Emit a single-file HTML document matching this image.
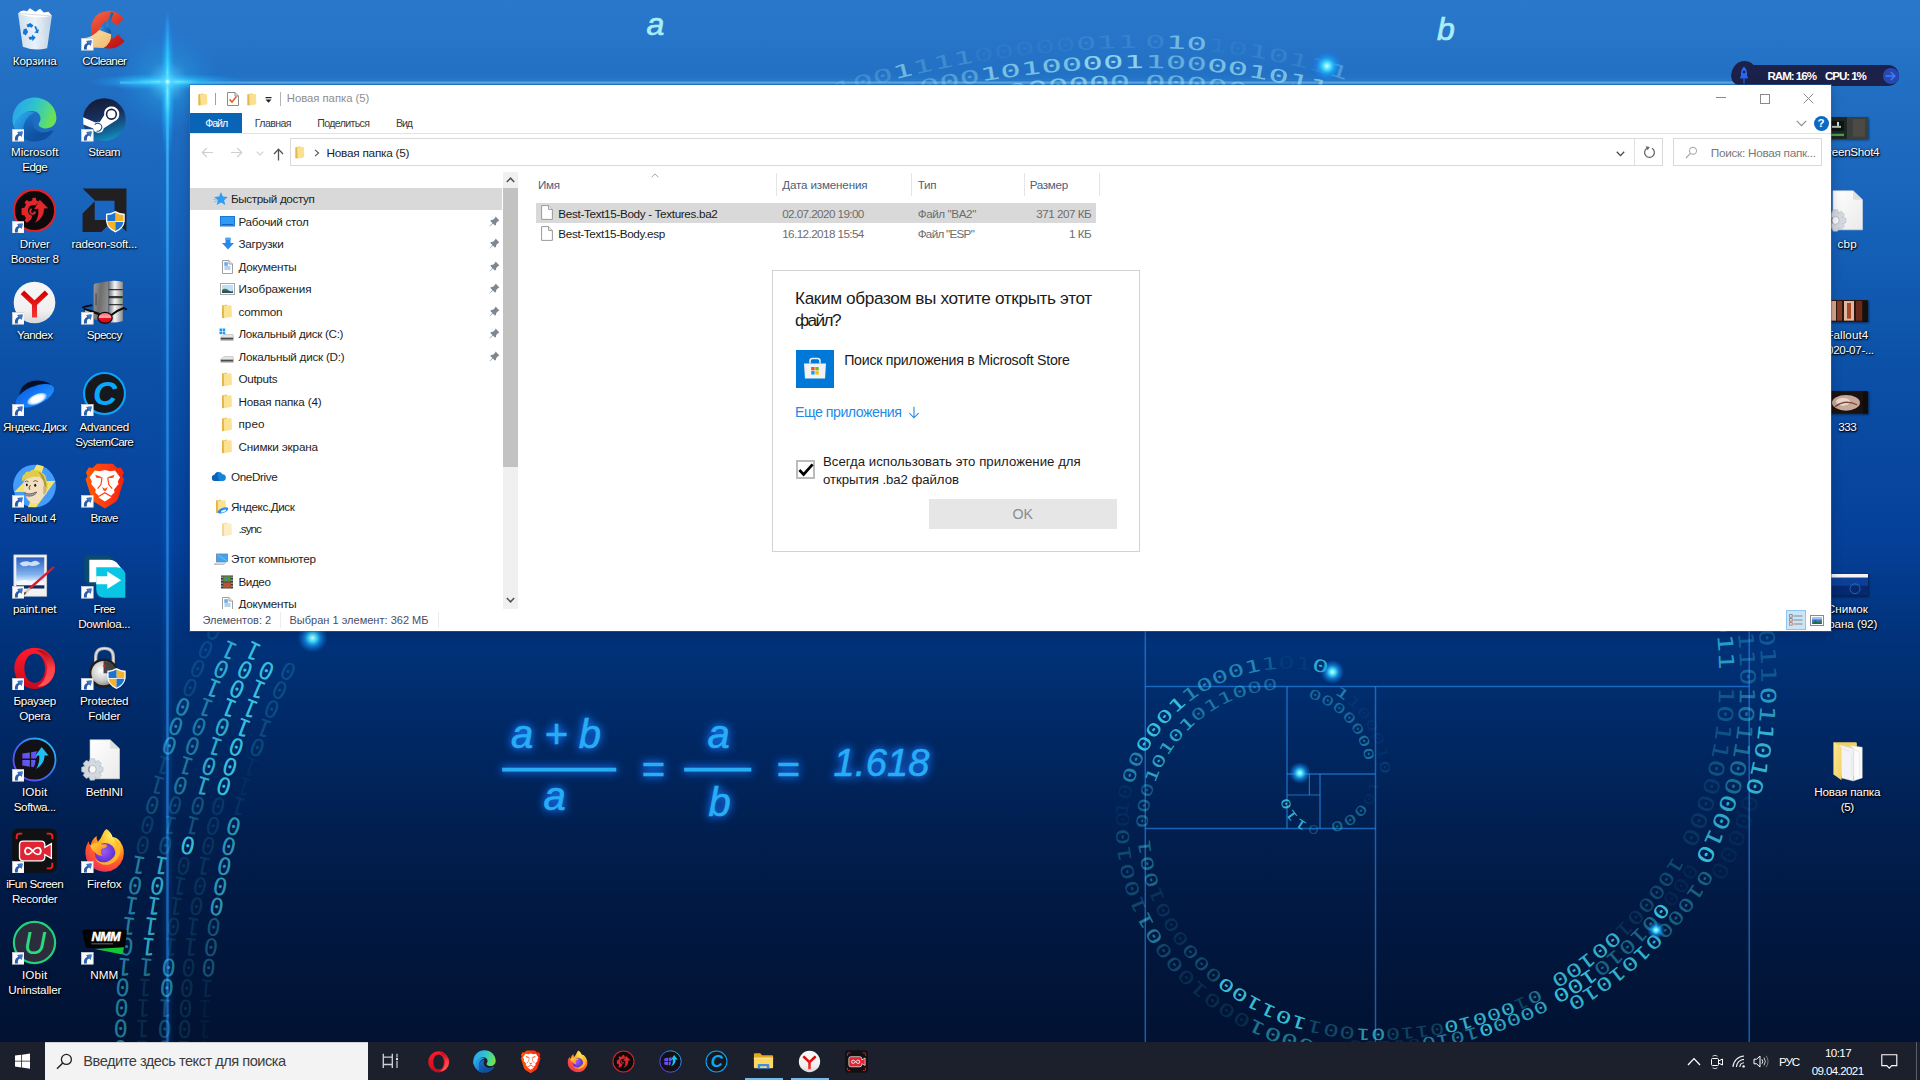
<!DOCTYPE html>
<html lang="ru"><head><meta charset="utf-8"><title>Новая папка (5)</title>
<style>
html,body{margin:0;padding:0;background:#01102e;}
body{width:1920px;height:1080px;position:relative;overflow:hidden;font-family:"Liberation Sans",sans-serif;-webkit-font-smoothing:antialiased;}
span{font-kerning:normal}
.dl{text-shadow:0 1px 2px rgba(0,0,0,0.9),1px 1px 1px rgba(0,0,0,0.75),0 0 3px rgba(0,0,0,0.55);}
</style></head><body>
<svg id="wall" width="1920" height="1080" viewBox="0 0 1920 1080" style="position:absolute;left:0;top:0">
<defs>
<linearGradient id="bg" x1="0" y1="0" x2="0" y2="1">
<stop offset="0" stop-color="#2a78cc"/>
<stop offset="0.035" stop-color="#2775c9"/>
<stop offset="0.072" stop-color="#2270c4"/>
<stop offset="0.2" stop-color="#1763ba"/>
<stop offset="0.35" stop-color="#0b4fa6"/>
<stop offset="0.5" stop-color="#05409a"/>
<stop offset="0.585" stop-color="#01337c"/>
<stop offset="0.68" stop-color="#002864"/>
<stop offset="0.775" stop-color="#011e4e"/>
<stop offset="0.87" stop-color="#01173e"/>
<stop offset="0.965" stop-color="#011232"/>
<stop offset="1" stop-color="#01102e"/>
</linearGradient>
<radialGradient id="flare" cx="0.5" cy="0.5" r="0.5">
<stop offset="0" stop-color="#ffffff" stop-opacity="1"/>
<stop offset="0.12" stop-color="#aef4ff" stop-opacity="0.95"/>
<stop offset="0.4" stop-color="#2fd0ff" stop-opacity="0.55"/>
<stop offset="1" stop-color="#1aa0ff" stop-opacity="0"/>
</radialGradient>
<radialGradient id="dot" cx="0.5" cy="0.5" r="0.5">
<stop offset="0" stop-color="#d8fdff" stop-opacity="1"/>
<stop offset="0.28" stop-color="#3fe0ff" stop-opacity="0.95"/>
<stop offset="0.55" stop-color="#1aa8ff" stop-opacity="0.6"/>
<stop offset="1" stop-color="#0a7cff" stop-opacity="0"/>
</radialGradient>
<linearGradient id="vline" x1="0" y1="0" x2="0" y2="1">
<stop offset="0" stop-color="#4fc6ff" stop-opacity="0"/>
<stop offset="0.06" stop-color="#4fc6ff" stop-opacity="0.9"/>
<stop offset="0.3" stop-color="#2f9cf0" stop-opacity="0.75"/>
<stop offset="1" stop-color="#1e78e0" stop-opacity="0.7"/>
</linearGradient>
<filter id="glow" x="-20%" y="-20%" width="140%" height="140%"><feGaussianBlur stdDeviation="3"/></filter>
<filter id="glow2" x="-10%" y="-30%" width="120%" height="160%"><feGaussianBlur stdDeviation="4.5"/></filter>
<filter id="soft" x="-5%" y="-5%" width="110%" height="110%"><feGaussianBlur stdDeviation="0.5"/></filter>
</defs>
<rect width="1920" height="1080" fill="url(#bg)"/>
<rect x="0" y="0" width="1920" height="1080" fill="#001a60" opacity="0.0"/>
<g filter="url(#glow)" opacity="0.55">
<line x1="167.5" y1="20" x2="167.5" y2="1045" stroke="#1e90ff" stroke-opacity="0.7" stroke-width="3"/>
<line x1="120" y1="82.5" x2="1750" y2="82.5" stroke="#3fa8f5" stroke-opacity="0.8" stroke-width="5"/>
</g>
<rect x="166.3" y="10" width="2.4" height="1035" fill="url(#vline)"/>
<line x1="120" y1="82.6" x2="1750" y2="82.6" stroke="#62b4ea" stroke-opacity="0.9" stroke-width="2.4"/>
<line x1="1145.3" y1="82" x2="1145.3" y2="1045" stroke="#2a8cf0" stroke-opacity="0.62" stroke-width="1.5"/>
<line x1="1749.2" y1="82" x2="1749.2" y2="1045" stroke="#2a8cf0" stroke-opacity="0.62" stroke-width="1.5"/>
<line x1="1145" y1="686.5" x2="1749" y2="686.5" stroke="#2a8cf0" stroke-opacity="0.62" stroke-width="1.5"/>
<line x1="1375.5" y1="686.5" x2="1375.5" y2="1045" stroke="#2a8cf0" stroke-opacity="0.62" stroke-width="1.5"/>
<line x1="1145" y1="828.6" x2="1375.5" y2="828.6" stroke="#2a8cf0" stroke-opacity="0.62" stroke-width="1.5"/>
<line x1="1287" y1="686.5" x2="1287" y2="828.6" stroke="#2a8cf0" stroke-opacity="0.62" stroke-width="1.5"/>
<line x1="1287" y1="774" x2="1375.5" y2="774" stroke="#2a8cf0" stroke-opacity="0.62" stroke-width="1.5"/>
<line x1="1320" y1="774" x2="1320" y2="828.6" stroke="#2a8cf0" stroke-opacity="0.62" stroke-width="1.5"/>
<line x1="1287" y1="795" x2="1320" y2="795" stroke="#2a8cf0" stroke-opacity="0.7" stroke-width="1.2"/>
<line x1="1309.4" y1="774" x2="1309.4" y2="795" stroke="#2a8cf0" stroke-opacity="0.7" stroke-width="1.2"/>
<g>
<ellipse cx="167.5" cy="81.7" rx="52" ry="52" fill="url(#flare)" opacity="0.38"/>
<ellipse cx="167.5" cy="81.7" rx="80" ry="8.5" fill="url(#flare)"/>
<ellipse cx="167.5" cy="81.7" rx="50" ry="3.4" fill="url(#flare)"/>
<ellipse cx="167.5" cy="88" rx="7.5" ry="76" fill="url(#flare)"/>
<ellipse cx="167.5" cy="84" rx="3.6" ry="52" fill="url(#flare)"/>
<ellipse cx="167.5" cy="81.7" rx="22" ry="22" fill="url(#flare)" opacity="0.6"/>
<ellipse cx="167.5" cy="81.7" rx="9" ry="9" fill="url(#flare)"/>
</g>
<path id="p1" d="M201.2 1051.3 A943.9 943.9 0 0 1 296.6 645.7" fill="none"/>
<text font-family="'DejaVu Sans Mono','Liberation Mono',monospace" font-size="24" letter-spacing="6.15" fill="#3fd3ea" rotate="-90"><textPath href="#p1"><tspan fill-opacity="0.06">011</tspan><tspan fill-opacity="0.11">1</tspan><tspan fill-opacity="0.32">000</tspan><tspan fill-opacity="0.68">0</tspan><tspan fill-opacity="0.68">0000</tspan><tspan fill-opacity="0.11">1</tspan><tspan fill-opacity="0.06">11</tspan><tspan fill-opacity="0.21">01000</tspan></textPath></text>
<path id="p2" d="M181.2 1051.1 A963.9 963.9 0 0 1 278.7 637.0" fill="none"/>
<text font-family="'DejaVu Sans Mono','Liberation Mono',monospace" font-size="24" letter-spacing="6.15" fill="#3fd3ea" rotate="-90"><textPath href="#p2"><tspan fill-opacity="0.15">100</tspan><tspan fill-opacity="0.15">00110</tspan><tspan fill-opacity="0.15">01000</tspan><tspan fill-opacity="0.90">00011</tspan><tspan fill-opacity="0.90">10</tspan></textPath></text>
<path id="p3" d="M161.2 1050.9 A983.9 983.9 0 0 1 260.7 628.2" fill="none"/>
<text font-family="'DejaVu Sans Mono','Liberation Mono',monospace" font-size="24" letter-spacing="6.15" fill="#3fd3ea" rotate="-90"><textPath href="#p3"><tspan fill-opacity="0.28">001</tspan><tspan fill-opacity="0.55">00</tspan><tspan fill-opacity="0.15">10110</tspan><tspan fill-opacity="0.90">0</tspan><tspan fill-opacity="0.28">10</tspan><tspan fill-opacity="0.75">1010</tspan><tspan fill-opacity="0.90">100</tspan><tspan fill-opacity="0.90">1</tspan></textPath></text>
<path id="p4" d="M139.2 1050.7 A1005.9 1005.9 0 0 1 240.9 618.6" fill="none"/>
<text font-family="'DejaVu Sans Mono','Liberation Mono',monospace" font-size="24" letter-spacing="6.15" fill="#3fd3ea" rotate="-90"><textPath href="#p4"><tspan fill-opacity="0.13">1</tspan><tspan fill-opacity="0.13">111</tspan><tspan fill-opacity="0.47">1</tspan><tspan fill-opacity="0.77">11101</tspan><tspan fill-opacity="0.24">010</tspan><tspan fill-opacity="0.47">01001</tspan><tspan fill-opacity="0.77">10</tspan><tspan fill-opacity="0.77">1</tspan></textPath></text>
<path id="p5" d="M117.2 1050.5 A1027.9 1027.9 0 0 1 221.1 608.9" fill="none"/>
<text font-family="'DejaVu Sans Mono','Liberation Mono',monospace" font-size="24" letter-spacing="6.15" fill="#3fd3ea" rotate="-90"><textPath href="#p5"><tspan fill-opacity="0.54">0</tspan><tspan fill-opacity="0.54">0001</tspan><tspan fill-opacity="0.54">01101</tspan><tspan fill-opacity="0.17">00</tspan><tspan fill-opacity="0.25">01</tspan><tspan fill-opacity="0.17">1</tspan><tspan fill-opacity="0.54">000</tspan><tspan fill-opacity="0.17">0000</tspan></textPath></text>
<path id="p6" d="M828.7 140.9 A971.5 971.5 0 0 1 1145.0 88.0" fill="none"/>
<text font-family="'DejaVu Sans Mono','Liberation Mono',monospace" font-size="18" fill="#a5e8f4"><textPath href="#p6" textLength="307.5" lengthAdjust="spacingAndGlyphs"><tspan fill-opacity="0.73">01110</tspan><tspan fill-opacity="0.73">11110</tspan><tspan fill-opacity="0.73">0000</tspan><tspan fill-opacity="0.61">0</tspan></textPath></text>
<path id="p7" d="M822.2 122.0 A991.5 991.5 0 0 1 1145.0 68.0" fill="none"/>
<text font-family="'DejaVu Sans Mono','Liberation Mono',monospace" font-size="18" fill="#a5e8f4"><textPath href="#p7" textLength="328.0" lengthAdjust="spacingAndGlyphs"><tspan fill-opacity="0.14">00000</tspan><tspan fill-opacity="0.38">000</tspan><tspan fill-opacity="0.68">10100</tspan><tspan fill-opacity="0.81">001</tspan></textPath></text>
<path id="p8" d="M815.7 103.1 A1011.5 1011.5 0 0 1 1145.0 48.0" fill="none"/>
<text font-family="'DejaVu Sans Mono','Liberation Mono',monospace" font-size="18" fill="#a5e8f4"><textPath href="#p8" textLength="328.0" lengthAdjust="spacingAndGlyphs"><tspan fill-opacity="0.23">1100</tspan><tspan fill-opacity="0.61">1</tspan><tspan fill-opacity="0.23">111</tspan><tspan fill-opacity="0.06">00000</tspan><tspan fill-opacity="0.12">011</tspan></textPath></text>
<path id="p9" d="M1145.0 88.0 A598.5 598.5 0 0 1 1349.7 124.1" fill="none"/>
<text font-family="'DejaVu Sans Mono','Liberation Mono',monospace" font-size="18" fill="#a5e8f4"><textPath href="#p9" textLength="205.0" lengthAdjust="spacingAndGlyphs"><tspan fill-opacity="0.54">000</tspan><tspan fill-opacity="0.54">00</tspan><tspan fill-opacity="0.30">01</tspan><tspan fill-opacity="0.30">11</tspan><tspan fill-opacity="0.65">0</tspan></textPath></text>
<path id="p10" d="M1145.0 68.0 A618.5 618.5 0 0 1 1356.5 105.3" fill="none"/>
<text font-family="'DejaVu Sans Mono','Liberation Mono',monospace" font-size="18" fill="#a5e8f4"><textPath href="#p10" textLength="205.0" lengthAdjust="spacingAndGlyphs"><tspan fill-opacity="0.50">100</tspan><tspan fill-opacity="0.68">0010</tspan><tspan fill-opacity="0.68">110</tspan></textPath></text>
<path id="p11" d="M1145.0 48.0 A638.5 638.5 0 0 1 1363.4 86.5" fill="none"/>
<text font-family="'DejaVu Sans Mono','Liberation Mono',monospace" font-size="18" fill="#a5e8f4"><textPath href="#p11" textLength="205.0" lengthAdjust="spacingAndGlyphs"><tspan fill-opacity="0.12">0</tspan><tspan fill-opacity="0.61">10</tspan><tspan fill-opacity="0.06">10</tspan><tspan fill-opacity="0.12">1011</tspan><tspan fill-opacity="0.34">1</tspan></textPath></text>
<path id="p12" d="M1715.2 616.5 A574.4 574.4 0 0 1 1719.4 686.5" fill="none"/>
<text font-family="'DejaVu Sans Mono','Liberation Mono',monospace" font-size="21" fill="#3fd3ea"><textPath href="#p12" textLength="54.0" lengthAdjust="spacingAndGlyphs"><tspan fill-opacity="0.68">011</tspan></textPath></text>
<path id="p13" d="M1736.0 613.9 A595.4 595.4 0 0 1 1740.4 686.5" fill="none"/>
<text font-family="'DejaVu Sans Mono','Liberation Mono',monospace" font-size="21" fill="#3fd3ea"><textPath href="#p13" textLength="72.0" lengthAdjust="spacingAndGlyphs"><tspan fill-opacity="0.90">1</tspan><tspan fill-opacity="0.28">110</tspan></textPath></text>
<path id="p14" d="M1756.8 611.4 A616.4 616.4 0 0 1 1761.4 686.5" fill="none"/>
<text font-family="'DejaVu Sans Mono','Liberation Mono',monospace" font-size="21" fill="#3fd3ea"><textPath href="#p14" textLength="72.0" lengthAdjust="spacingAndGlyphs"><tspan fill-opacity="0.25">00</tspan><tspan fill-opacity="0.25">11</tspan></textPath></text>
<path id="p15" d="M1718.9 686.5 A343.4 339.0 0 0 1 1672.9 856.0" fill="none"/>
<text font-family="'DejaVu Sans Mono','Liberation Mono',monospace" font-size="21" fill="#3fd3ea"><textPath href="#p15" textLength="162.0" lengthAdjust="spacingAndGlyphs"><tspan fill-opacity="0.25">10110</tspan><tspan fill-opacity="0.14">0000</tspan></textPath></text>
<path id="p16" d="M1739.9 686.5 A364.4 358.0 0 0 1 1691.1 865.5" fill="none"/>
<text font-family="'DejaVu Sans Mono','Liberation Mono',monospace" font-size="21" fill="#3fd3ea"><textPath href="#p16" textLength="180.0" lengthAdjust="spacingAndGlyphs"><tspan fill-opacity="0.42">10110</tspan><tspan fill-opacity="0.42">0</tspan><tspan fill-opacity="0.75">001</tspan><tspan fill-opacity="0.90">0</tspan></textPath></text>
<path id="p17" d="M1760.9 686.5 A385.4 377.0 0 0 1 1709.3 875.0" fill="none"/>
<text font-family="'DejaVu Sans Mono','Liberation Mono',monospace" font-size="21" fill="#3fd3ea"><textPath href="#p17" textLength="198.0" lengthAdjust="spacingAndGlyphs"><tspan fill-opacity="0.68">01</tspan><tspan fill-opacity="0.81">1010</tspan><tspan fill-opacity="0.07">00000</tspan></textPath></text>
<path id="p18" d="M1673.9 855.3 A344.5 337.5 0 0 1 1537.2 984.5" fill="none"/>
<text font-family="'DejaVu Sans Mono','Liberation Mono',monospace" font-size="18" fill="#3fd3ea"><textPath href="#p18" textLength="176.0" lengthAdjust="spacingAndGlyphs"><tspan fill-opacity="0.25">1000</tspan><tspan fill-opacity="0.14">01</tspan><tspan fill-opacity="0.81">00100</tspan></textPath></text>
<path id="p19" d="M1688.6 861.8 A361.5 350.5 0 0 1 1545.2 996.0" fill="none"/>
<text font-family="'DejaVu Sans Mono','Liberation Mono',monospace" font-size="18" fill="#3fd3ea"><textPath href="#p19" textLength="192.0" lengthAdjust="spacingAndGlyphs"><tspan fill-opacity="0.08">0</tspan><tspan fill-opacity="0.08">00</tspan><tspan fill-opacity="0.90">0</tspan><tspan fill-opacity="0.42">01010</tspan><tspan fill-opacity="0.90">100</tspan></textPath></text>
<path id="p20" d="M1703.3 868.3 A378.5 363.5 0 0 1 1553.2 1007.5" fill="none"/>
<text font-family="'DejaVu Sans Mono','Liberation Mono',monospace" font-size="18" fill="#3fd3ea"><textPath href="#p20" textLength="192.0" lengthAdjust="spacingAndGlyphs"><tspan fill-opacity="0.38">01000</tspan><tspan fill-opacity="0.81">0101</tspan><tspan fill-opacity="0.81">010</tspan></textPath></text>
<path id="p21" d="M1538.6 988.8 A347.4 342.4 0 0 1 1345.2 1027.6" fill="none"/>
<text font-family="'DejaVu Sans Mono','Liberation Mono',monospace" font-size="15.5" fill="#3fd3ea"><textPath href="#p21" textLength="188.5" lengthAdjust="spacingAndGlyphs"><tspan fill-opacity="0.50">0</tspan><tspan fill-opacity="0.25">1</tspan><tspan fill-opacity="0.81">000</tspan><tspan fill-opacity="0.81">10</tspan><tspan fill-opacity="0.25">0110</tspan><tspan fill-opacity="0.68">01</tspan></textPath></text>
<path id="p22" d="M1544.7 999.4 A360.4 354.4 0 0 1 1344.1 1039.6" fill="none"/>
<text font-family="'DejaVu Sans Mono','Liberation Mono',monospace" font-size="15.5" fill="#3fd3ea"><textPath href="#p22" textLength="203.0" lengthAdjust="spacingAndGlyphs"><tspan fill-opacity="0.75">0000</tspan><tspan fill-opacity="0.90">0</tspan><tspan fill-opacity="0.55">1010</tspan><tspan fill-opacity="0.15">00100</tspan></textPath></text>
<path id="p23" d="M1355.8 1027.3 A226.1 202.1 0 0 1 1149.4 826.0" fill="none"/>
<text font-family="'DejaVu Sans Mono','Liberation Mono',monospace" font-size="16.5" fill="#3fd3ea"><textPath href="#p23" textLength="304.0" lengthAdjust="spacingAndGlyphs"><tspan fill-opacity="0.28">001</tspan><tspan fill-opacity="0.90">101</tspan><tspan fill-opacity="0.90">100</tspan><tspan fill-opacity="0.28">000</tspan><tspan fill-opacity="0.15">0001</tspan><tspan fill-opacity="0.42">001</tspan></textPath></text>
<path id="p24" d="M1332.7 1044.3 A246.7 221.7 0 0 1 1129.4 810.5" fill="none"/>
<text font-family="'DejaVu Sans Mono','Liberation Mono',monospace" font-size="17.5" fill="#3fd3ea"><textPath href="#p24" textLength="340.0" lengthAdjust="spacingAndGlyphs"><tspan fill-opacity="0.14">0</tspan><tspan fill-opacity="0.50">0001</tspan><tspan fill-opacity="0.14">00010</tspan><tspan fill-opacity="0.25">00</tspan><tspan fill-opacity="0.50">01</tspan><tspan fill-opacity="0.25">10010</tspan><tspan fill-opacity="0.07">0</tspan></textPath></text>
<path id="p25" d="M1147.6 828.6 A139.4 139.4 0 0 1 1287.0 689.2" fill="none"/>
<text font-family="'DejaVu Sans Mono','Liberation Mono',monospace" font-size="15.5" fill="#3fd3ea"><textPath href="#p25" textLength="210.0" lengthAdjust="spacingAndGlyphs"><tspan fill-opacity="0.34">000</tspan><tspan fill-opacity="0.72">10101</tspan><tspan fill-opacity="0.44">0110</tspan><tspan fill-opacity="0.34">00</tspan></textPath></text>
<path id="p26" d="M1127.5 817.4 A159.9 159.9 0 0 1 1328.4 674.2" fill="none"/>
<text font-family="'DejaVu Sans Mono','Liberation Mono',monospace" font-size="17" fill="#3fd3ea"><textPath href="#p26" textLength="280.5" lengthAdjust="spacingAndGlyphs"><tspan fill-opacity="0.08">10</tspan><tspan fill-opacity="0.55">00</tspan><tspan fill-opacity="0.90">0001</tspan><tspan fill-opacity="0.55">10001</tspan><tspan fill-opacity="0.28">1</tspan><tspan fill-opacity="0.08">01</tspan><tspan fill-opacity="0.75">0</tspan></textPath></text>
<path id="p27" d="M1307.5 697.4 A79.3 79.3 0 0 1 1366.3 774.0" fill="none"/>
<text font-family="'DejaVu Sans Mono','Liberation Mono',monospace" font-size="13" fill="#3fd3ea"><textPath href="#p27" textLength="91.0" lengthAdjust="spacingAndGlyphs"><tspan fill-opacity="0.38">00000</tspan><tspan fill-opacity="0.45">00</tspan></textPath></text>
<path id="p28" d="M1333.7 693.2 A93.3 93.3 0 0 1 1380.0 782.1" fill="none"/>
<text font-family="'DejaVu Sans Mono','Liberation Mono',monospace" font-size="13" fill="#3fd3ea"><textPath href="#p28" textLength="98.0" lengthAdjust="spacingAndGlyphs"><tspan fill-opacity="0.50">1</tspan><tspan fill-opacity="0.07">10001</tspan><tspan fill-opacity="0.14">0</tspan></textPath></text>
<path id="p29" d="M1370.1 778.4 A50.3 50.3 0 0 1 1320.0 824.3" fill="none"/>
<text font-family="'DejaVu Sans Mono','Liberation Mono',monospace" font-size="13" fill="#3fd3ea"><textPath href="#p29" textLength="65.0" lengthAdjust="spacingAndGlyphs"><tspan fill-opacity="0.08">10</tspan><tspan fill-opacity="0.40">000</tspan></textPath></text>
<path id="p30" d="M1320.0 825.7 A30.7 30.7 0 0 1 1289.4 792.3" fill="none"/>
<text font-family="'DejaVu Sans Mono','Liberation Mono',monospace" font-size="12" fill="#3fd3ea"><textPath href="#p30" textLength="46.0" lengthAdjust="spacingAndGlyphs"><tspan fill-opacity="0.25">0</tspan><tspan fill-opacity="0.81">110</tspan></textPath></text>
<circle cx="1327" cy="66" r="15" fill="url(#dot)"/>
<circle cx="312.6" cy="637.7" r="15" fill="url(#dot)"/>
<circle cx="1332.4" cy="672" r="12" fill="url(#dot)"/>
<circle cx="1299.8" cy="773" r="11" fill="url(#dot)"/>
<circle cx="1656" cy="930" r="9" fill="url(#dot)"/>
<text x="655.5" y="35" font-family="'Liberation Sans',sans-serif" font-style="italic" font-size="32" fill="#a9eef6" stroke="#a9eef6" stroke-width="0.7" text-anchor="middle">a</text>
<text x="1446" y="40" font-family="'Liberation Sans',sans-serif" font-style="italic" font-size="32" fill="#a9eef6" stroke="#a9eef6" stroke-width="0.7" text-anchor="middle">b</text>
<g filter="url(#glow2)" opacity="0.85"><text x="556" y="748" font-family="'Liberation Sans',sans-serif" font-style="italic" font-size="40" fill="#1478ff" stroke="#1478ff" stroke-width="3" text-anchor="middle" textLength="90">a+b</text><rect x="502.5" y="768" width="113.5" height="3.2" fill="#1478ff" stroke="#1478ff" stroke-width="3"/><text x="554.5" y="809.5" font-family="'Liberation Sans',sans-serif" font-style="italic" font-size="40" fill="#1478ff" stroke="#1478ff" stroke-width="3" text-anchor="middle">a</text><text x="653.5" y="783" font-family="'Liberation Sans',sans-serif" font-size="40" fill="#1478ff" stroke="#1478ff" stroke-width="3" text-anchor="middle">=</text><text x="718.5" y="748" font-family="'Liberation Sans',sans-serif" font-style="italic" font-size="40" fill="#1478ff" stroke="#1478ff" stroke-width="3" text-anchor="middle">a</text><rect x="684.5" y="768" width="66.5" height="3.2" fill="#1478ff" stroke="#1478ff" stroke-width="3"/><text x="719.5" y="816" font-family="'Liberation Sans',sans-serif" font-style="italic" font-size="40" fill="#1478ff" stroke="#1478ff" stroke-width="3" text-anchor="middle">b</text><text x="788.5" y="783" font-family="'Liberation Sans',sans-serif" font-size="40" fill="#1478ff" stroke="#1478ff" stroke-width="3" text-anchor="middle">=</text><text x="881.5" y="776" font-family="'Liberation Sans',sans-serif" font-style="italic" font-size="38" fill="#1478ff" stroke="#1478ff" stroke-width="3" text-anchor="middle" textLength="96">1.618</text></g>
<g><text x="556" y="748" font-family="'Liberation Sans',sans-serif" font-style="italic" font-size="40" fill="#27adf4" stroke="#27adf4" stroke-width="0.6" text-anchor="middle" textLength="90">a+b</text><rect x="502.5" y="768" width="113.5" height="3.2" fill="#27adf4" stroke="#27adf4" stroke-width="0.6"/><text x="554.5" y="809.5" font-family="'Liberation Sans',sans-serif" font-style="italic" font-size="40" fill="#27adf4" stroke="#27adf4" stroke-width="0.6" text-anchor="middle">a</text><text x="653.5" y="783" font-family="'Liberation Sans',sans-serif" font-size="40" fill="#27adf4" stroke="#27adf4" stroke-width="0.6" text-anchor="middle">=</text><text x="718.5" y="748" font-family="'Liberation Sans',sans-serif" font-style="italic" font-size="40" fill="#27adf4" stroke="#27adf4" stroke-width="0.6" text-anchor="middle">a</text><rect x="684.5" y="768" width="66.5" height="3.2" fill="#27adf4" stroke="#27adf4" stroke-width="0.6"/><text x="719.5" y="816" font-family="'Liberation Sans',sans-serif" font-style="italic" font-size="40" fill="#27adf4" stroke="#27adf4" stroke-width="0.6" text-anchor="middle">b</text><text x="788.5" y="783" font-family="'Liberation Sans',sans-serif" font-size="40" fill="#27adf4" stroke="#27adf4" stroke-width="0.6" text-anchor="middle">=</text><text x="881.5" y="776" font-family="'Liberation Sans',sans-serif" font-style="italic" font-size="38" fill="#27adf4" stroke="#27adf4" stroke-width="0.6" text-anchor="middle" textLength="96">1.618</text></g>
</svg>
<div id="desktop"><svg style="position:absolute;left:12.200000000000003px;top:5.6px;overflow:visible" width="45" height="45" viewBox="0 0 48 48"><defs><linearGradient id="g1" x1="0" y1="0" x2="1" y2="0"><stop offset="0" stop-color="#dfe9f2"/><stop offset="0.5" stop-color="#ffffff"/><stop offset="1" stop-color="#cfdbe6"/></linearGradient></defs>
<path d="M6.5 8 L42.5 10.5 L37.5 45 Q24 48.5 11.5 43.5 Z" fill="url(#g1)" fill-opacity="0.9"/>
<path d="M6.5 8 Q10 3 16 5.5 L19 2.5 L25 6 L30 3 L34 7 L39 6 L42.5 10.5 Q24 15 6.5 8Z" fill="#fdfdfd"/>
<path d="M6.5 8 L42.5 10.5" stroke="#c6d3df" stroke-width="0.8" fill="none"/>
<path d="M28 12 L33 20 L29 30 L34 38 M14 14 L18 24 L13 32" stroke="#e3e9ef" stroke-width="1.2" fill="none"/>
<g fill="#1777d8"><path d="M15.5 20 L19.5 18.2 L23 20.8 L20.8 23.2 L19 22 L16.8 23Z"/><path d="M12.2 25 L15.2 23.6 L17.2 27.6 L14.6 31.4 L11.6 29.4Z"/><path d="M17.5 33 L21.5 32.4 L21.3 30.4 L25.3 33.6 L21.8 37.6 L21.6 35.6 L18.8 36Z"/><path d="M23.8 22 L25.8 26.6 L23.6 28.2 L27.8 29 L28.8 24.6 L27.4 25.6 L25.6 21.4Z"/></g></svg>
<span class="dl" style="position:absolute;left:-465.30px;width:1000px;text-align:center;top:52.90px;font-size:11.7px;line-height:15px;color:#fff;letter-spacing:-0.081px;white-space:nowrap;">Корзина</span>
<svg style="position:absolute;left:81.7px;top:5.6px;overflow:visible" width="45" height="45" viewBox="0 0 48 48"><defs><linearGradient id="g2" x1="0" y1="0" x2="0.6" y2="1"><stop offset="0" stop-color="#f36a4a"/><stop offset="0.5" stop-color="#e23a2a"/><stop offset="1" stop-color="#c01818"/></linearGradient>
<linearGradient id="g3" x1="0" y1="0" x2="1" y2="1"><stop offset="0" stop-color="#fbe3b0"/><stop offset="1" stop-color="#f0b868"/></linearGradient>
<linearGradient id="g4" x1="0" y1="0" x2="1" y2="0"><stop offset="0" stop-color="#3c8fdc"/><stop offset="1" stop-color="#0e5aa8"/></linearGradient></defs>
<path d="M44.5 13.5 Q37 4 27 5.2 Q11 7 9.6 23.5 Q9 41 25.5 45 Q37 47 45.5 37.5 L38.5 30 Q33.5 35.8 27 34.6 Q19.5 33 19.8 24.6 Q20.6 16.6 28 16.2 Q33.6 16.2 37.6 21 Z" fill="url(#g2)"/>
<path d="M31 6.5 L33.6 7.4 L27.6 25.2 L24.6 24.2 Z" fill="url(#g4)"/>
<path d="M18 23.6 Q21.6 20 27 22.6 Q31.6 25 31 29.8 L18.6 26.6Z" fill="url(#g4)"/>
<path d="M18.2 25.6 L31 30 Q31.6 40 22.6 44.8 Q15 44 9.2 44.2 L3.2 43.6 Q1 39 1.4 34.4 Q11 33.6 18.2 25.6Z" fill="url(#g3)"/></svg>
<svg style="position:absolute;left:81.4px;top:38.0px" width="12.6" height="12.6" viewBox="0 0 12.8 12.8"><rect x="0.4" y="0.4" width="12" height="12" fill="#fcfcfc" stroke="#cfcfcf" stroke-width="0.7"/><path d="M3 11.6 Q2.4 6.4 6.4 5.2 L5.4 3 L10.8 2.6 L10 8 L8.2 6.6 Q5.6 7.4 6 11.6Z" fill="#2b5cab"/><path d="M5.4 3 L10.8 2.6 L10 8 L8.6 6.4Z" fill="#3a76cc"/></svg>
<span class="dl" style="position:absolute;left:-395.80px;width:1000px;text-align:center;top:52.90px;font-size:11.7px;line-height:15px;color:#fff;letter-spacing:-0.678px;white-space:nowrap;">CCleaner</span>
<svg style="position:absolute;left:12.200000000000003px;top:97.0px;overflow:visible" width="45" height="45" viewBox="0 0 48 48"><defs><linearGradient id="g5" x1="0" y1="0" x2="0.9" y2="1"><stop offset="0" stop-color="#2fb2ee"/><stop offset="1" stop-color="#1467c4"/></linearGradient>
<linearGradient id="g6" x1="0.05" y1="0.3" x2="0.95" y2="0.55"><stop offset="0" stop-color="#2aa6ea"/><stop offset="0.45" stop-color="#2ec2d0"/><stop offset="0.8" stop-color="#4fd88a"/><stop offset="1" stop-color="#6ee052"/></linearGradient>
<linearGradient id="g7" x1="0.2" y1="0" x2="0.7" y2="1"><stop offset="0" stop-color="#1a70c6"/><stop offset="1" stop-color="#0d4a98"/></linearGradient></defs>
<path d="M0.6 24 C0.6 31 3.6 37.6 9 42 C13 45.4 18 47.2 22 47.4 C16 43 12.8 37.6 12.8 32 C12.8 24.6 17.6 19 24.6 17 C16 13 4 17 0.6 24Z" fill="url(#g5)"/>
<path d="M11 43.4 C14.6 46 19 47.4 24 47.4 C32 47.4 39.5 43.5 43.6 37 C44.4 35.6 43.2 34.6 42 35.4 C37 38.6 30 38.6 25.6 35 C21 31 20.6 25 23.6 20.6 C17 22 12.4 27 12.4 33 C12.4 37 13.6 40.6 11 43.4Z" fill="url(#g7)"/>
<path d="M12.4 33 C12.4 27 17 22 23.6 20.6 C21 24.4 21 31 25.6 35 C30 38.6 37 38.6 42 35.4 C36 43 26 45 19 41 C15 38.6 12.4 36 12.4 33Z" fill="url(#g7)"/>
<path d="M0.6 24 C0.6 10.6 11 0.6 24 0.6 C37 0.6 47.4 10.5 47.4 22.5 C47.4 29 42.5 33.5 36.5 33.5 C32 33.5 28.4 31.6 28.4 29 C28.4 27.6 30.4 26.4 30.4 22.6 C30.4 18.5 26.5 15 21.5 15 C12 15 3.5 21.5 2.4 31 C1.2 29 0.6 26.5 0.6 24Z" fill="url(#g6)"/></svg>
<svg style="position:absolute;left:11.900000000000002px;top:129.4px" width="12.6" height="12.6" viewBox="0 0 12.8 12.8"><rect x="0.4" y="0.4" width="12" height="12" fill="#fcfcfc" stroke="#cfcfcf" stroke-width="0.7"/><path d="M3 11.6 Q2.4 6.4 6.4 5.2 L5.4 3 L10.8 2.6 L10 8 L8.2 6.6 Q5.6 7.4 6 11.6Z" fill="#2b5cab"/><path d="M5.4 3 L10.8 2.6 L10 8 L8.6 6.4Z" fill="#3a76cc"/></svg>
<span class="dl" style="position:absolute;left:-465.30px;width:1000px;text-align:center;top:144.30px;font-size:11.7px;line-height:15px;color:#fff;letter-spacing:0.005px;white-space:nowrap;">Microsoft</span><span class="dl" style="position:absolute;left:-465.30px;width:1000px;text-align:center;top:159.30px;font-size:11.7px;line-height:15px;color:#fff;letter-spacing:-0.581px;white-space:nowrap;">Edge</span>
<svg style="position:absolute;left:81.7px;top:97.0px;overflow:visible" width="45" height="45" viewBox="0 0 48 48"><defs><linearGradient id="g8" x1="0.3" y1="0" x2="0.6" y2="1"><stop offset="0" stop-color="#151a33"/><stop offset="0.45" stop-color="#17305f"/><stop offset="0.8" stop-color="#13679a"/><stop offset="1" stop-color="#1192c2"/></linearGradient></defs>
<circle cx="23.8" cy="24" r="22.8" fill="url(#g8)"/>
<path d="M1.2 21.6 L14.4 27.2 Q16.6 26 19 26.6 L23.6 19.4 Q23 12 29.6 10.2 Q37 9 39.6 16 Q41 23.4 34 26.4 L23.2 33.4 Q22.2 38.4 17 38.2 Q12.8 37.6 12 33.6 L1.4 29.2 Z" fill="#fff"/>
<circle cx="31.4" cy="18.4" r="5.2" fill="none" stroke="#1a2348" stroke-width="1.7"/>
<path d="M13.6 29.6 A4.2 4.2 0 1 1 15.6 36.2" fill="none" stroke="#1d4f86" stroke-width="1.1"/></svg>
<svg style="position:absolute;left:81.4px;top:129.4px" width="12.6" height="12.6" viewBox="0 0 12.8 12.8"><rect x="0.4" y="0.4" width="12" height="12" fill="#fcfcfc" stroke="#cfcfcf" stroke-width="0.7"/><path d="M3 11.6 Q2.4 6.4 6.4 5.2 L5.4 3 L10.8 2.6 L10 8 L8.2 6.6 Q5.6 7.4 6 11.6Z" fill="#2b5cab"/><path d="M5.4 3 L10.8 2.6 L10 8 L8.6 6.4Z" fill="#3a76cc"/></svg>
<span class="dl" style="position:absolute;left:-395.80px;width:1000px;text-align:center;top:144.30px;font-size:11.7px;line-height:15px;color:#fff;letter-spacing:-0.363px;white-space:nowrap;">Steam</span>
<svg style="position:absolute;left:12.200000000000003px;top:188.4px;overflow:visible" width="45" height="45" viewBox="0 0 48 48"><circle cx="24" cy="24" r="22" fill="#0e0a0b" stroke="#e02228" stroke-width="2.2"/>
<g fill="#e3262b"><path d="M22 10.5 L25.4 10.5 L26 13.4 Q27.6 13.8 29 14.6 L25 18.4 Q22.6 17.6 20.4 18.6 Q16.6 20.6 17 24.8 Q17.6 28.6 21.6 29.6 L20.6 33 L18 35.4 L15.8 37 L13.4 34.6 L15 32 Q13.8 30.6 13.2 29 L10.2 28.6 L10.2 25 L10.2 21.6 L13.2 21 Q13.8 19.2 15 17.8 L13.4 15.2 L15.8 12.8 L18.4 14.4 Q19.8 13.6 21.4 13.2 Z"/>
<path d="M29.6 12.4 L38.6 21.6 L34.2 21.8 Q34.4 31.6 24.4 37.4 Q29 31 28 22.2 L23.6 22.6 Z"/>
<path d="M20.8 21.6 A3.6 3.6 0 1 0 25.6 25.4 L23.4 24.8 A1.6 1.6 0 1 1 21.4 23.4Z"/></g></svg>
<svg style="position:absolute;left:11.900000000000002px;top:220.8px" width="12.6" height="12.6" viewBox="0 0 12.8 12.8"><rect x="0.4" y="0.4" width="12" height="12" fill="#fcfcfc" stroke="#cfcfcf" stroke-width="0.7"/><path d="M3 11.6 Q2.4 6.4 6.4 5.2 L5.4 3 L10.8 2.6 L10 8 L8.2 6.6 Q5.6 7.4 6 11.6Z" fill="#2b5cab"/><path d="M5.4 3 L10.8 2.6 L10 8 L8.6 6.4Z" fill="#3a76cc"/></svg>
<span class="dl" style="position:absolute;left:-465.30px;width:1000px;text-align:center;top:235.70px;font-size:11.7px;line-height:15px;color:#fff;letter-spacing:-0.200px;white-space:nowrap;">Driver</span><span class="dl" style="position:absolute;left:-465.30px;width:1000px;text-align:center;top:250.70px;font-size:11.7px;line-height:15px;color:#fff;letter-spacing:-0.231px;white-space:nowrap;">Booster 8</span>
<svg style="position:absolute;left:81.7px;top:188.4px;overflow:visible" width="45" height="45" viewBox="0 0 48 48"><path d="M0.6 0.6 H47.4 V46.6 L34.6 33.8 V13.6 H14 Z" fill="#211f20"/><path d="M13.6 14.2 V34 H33.4 L20.6 46.8 H0.6 V27.2 Z" fill="#211f20"/><rect x="13.8" y="13.8" width="20.6" height="20" fill="#1a66c2"/><g transform="translate(25.6 24.4) scale(1.0)"><path d="M10 0 Q15 3 20 3 V11 Q19 19 10 23 Q1 19 0 11 V3 Q5 3 10 0Z" fill="#fff"/><path d="M10 1.6 Q14.4 4.2 18.6 4.4 V11 L10 11Z" fill="#f3b229"/><path d="M10 1.6 Q5.6 4.2 1.4 4.4 V11 L10 11Z" fill="#1d74d0"/><path d="M1.4 11.8 Q2.4 18 10 21.4 V11.8Z" fill="#f3b229"/><path d="M18.6 11.8 Q17.6 18 10 21.4 V11.8Z" fill="#1d74d0"/></g></svg>
<span class="dl" style="position:absolute;left:-395.80px;width:1000px;text-align:center;top:235.70px;font-size:11.7px;line-height:15px;color:#fff;letter-spacing:-0.246px;white-space:nowrap;">radeon-soft...</span>
<svg style="position:absolute;left:12.200000000000003px;top:279.80000000000007px;overflow:visible" width="45" height="45" viewBox="0 0 48 48"><defs><linearGradient id="g9" x1="0" y1="0" x2="0" y2="1"><stop offset="0" stop-color="#f7f7f7"/><stop offset="0.7" stop-color="#f0f0f0"/><stop offset="1" stop-color="#d6d6d8"/></linearGradient>
<linearGradient id="g10" x1="0" y1="0" x2="0" y2="1"><stop offset="0" stop-color="#d80000"/><stop offset="1" stop-color="#f53636"/></linearGradient></defs>
<circle cx="24" cy="24" r="22.2" fill="url(#g9)"/>
<path d="M11.1 13.3 L24 25.4 L36.9 13.3 M24 24 V40" fill="none" stroke="url(#g10)" stroke-width="5.4" stroke-linejoin="miter"/></svg>
<svg style="position:absolute;left:11.900000000000002px;top:312.20000000000005px" width="12.6" height="12.6" viewBox="0 0 12.8 12.8"><rect x="0.4" y="0.4" width="12" height="12" fill="#fcfcfc" stroke="#cfcfcf" stroke-width="0.7"/><path d="M3 11.6 Q2.4 6.4 6.4 5.2 L5.4 3 L10.8 2.6 L10 8 L8.2 6.6 Q5.6 7.4 6 11.6Z" fill="#2b5cab"/><path d="M5.4 3 L10.8 2.6 L10 8 L8.6 6.4Z" fill="#3a76cc"/></svg>
<span class="dl" style="position:absolute;left:-465.30px;width:1000px;text-align:center;top:327.10px;font-size:11.7px;line-height:15px;color:#fff;letter-spacing:-0.552px;white-space:nowrap;">Yandex</span>
<svg style="position:absolute;left:81.7px;top:279.80000000000007px;overflow:visible" width="45" height="45" viewBox="0 0 48 48"><defs><linearGradient id="g11" x1="0" y1="0" x2="1" y2="0.3"><stop offset="0" stop-color="#9a9a9a"/><stop offset="0.5" stop-color="#6e6e6e"/><stop offset="1" stop-color="#8c8c8c"/></linearGradient>
<linearGradient id="g12" x1="0" y1="0" x2="1" y2="0"><stop offset="0" stop-color="#6a6a6a"/><stop offset="0.45" stop-color="#f6f6f6"/><stop offset="1" stop-color="#8a8a8a"/></linearGradient>
<linearGradient id="g13" x1="0" y1="0" x2="0" y2="1"><stop offset="0" stop-color="#ff5a64"/><stop offset="0.45" stop-color="#ffb0b4"/><stop offset="0.55" stop-color="#e81424"/><stop offset="1" stop-color="#c00818"/></linearGradient></defs>
<path d="M12.4 6 Q12.4 4.4 14 3.8 L28 1.2 V45 L14 42 Q12.4 41.6 12.4 40 Z" fill="url(#g11)"/>
<path d="M28 1.2 Q36 0 43.6 2 V43.6 Q36 46 28 45Z" fill="url(#g12)"/>
<path d="M28.6 9.6 H43.4 V11 H28.6Z M28.6 17 H43.4 V19.4 H28.6Z M28.6 25.6 H43.4 V27 H28.6Z" fill="#1c1c1c" fill-opacity="0.85"/>
<circle cx="40.6" cy="21.8" r="0.9" fill="#5ae04a"/><path d="M15 14 V27" stroke="#4a4a4a" stroke-width="1.2"/>
<path d="M0.6 30 Q1 28.6 3 28.4 L11 26.8" fill="none" stroke="#0a0a0a" stroke-width="2"/>
<path d="M2 31 Q10 33 18.6 36.4" fill="none" stroke="#0a0a0a" stroke-width="2.4"/>
<path d="M31.4 37.4 Q37 32.6 44 30.2 Q46.6 29.6 47.4 32" fill="none" stroke="#0a0a0a" stroke-width="2.2"/>
<ellipse cx="24.6" cy="40.4" rx="7.6" ry="5.8" fill="url(#g13)" stroke="#140808" stroke-width="1.3"/>
<path d="M3 32 L11 35 L10 39 L4 37Z" fill="#dfe8f4" fill-opacity="0.75"/></svg>
<svg style="position:absolute;left:81.4px;top:312.20000000000005px" width="12.6" height="12.6" viewBox="0 0 12.8 12.8"><rect x="0.4" y="0.4" width="12" height="12" fill="#fcfcfc" stroke="#cfcfcf" stroke-width="0.7"/><path d="M3 11.6 Q2.4 6.4 6.4 5.2 L5.4 3 L10.8 2.6 L10 8 L8.2 6.6 Q5.6 7.4 6 11.6Z" fill="#2b5cab"/><path d="M5.4 3 L10.8 2.6 L10 8 L8.6 6.4Z" fill="#3a76cc"/></svg>
<span class="dl" style="position:absolute;left:-395.80px;width:1000px;text-align:center;top:327.10px;font-size:11.7px;line-height:15px;color:#fff;letter-spacing:-0.561px;white-space:nowrap;">Speccy</span>
<svg style="position:absolute;left:12.200000000000003px;top:371.20000000000005px;overflow:visible" width="45" height="45" viewBox="0 0 48 48"><defs><linearGradient id="g14" x1="0.1" y1="0" x2="0.7" y2="1"><stop offset="0" stop-color="#0a62e8"/><stop offset="1" stop-color="#1e90ff"/></linearGradient>
<linearGradient id="g15" x1="0.2" y1="0" x2="0.6" y2="1"><stop offset="0" stop-color="#02040c"/><stop offset="0.6" stop-color="#0a1f4a"/><stop offset="1" stop-color="#0a50c0"/></linearGradient>
<radialGradient id="g16" cx="0.5" cy="0.5" r="0.5"><stop offset="0" stop-color="#ffffff"/><stop offset="0.55" stop-color="#ffffff"/><stop offset="0.8" stop-color="#d6ecff" stop-opacity="0.8"/><stop offset="1" stop-color="#8cc8ff" stop-opacity="0"/></radialGradient></defs>
<path d="M8 24 Q10 13.6 22 10.6 Q32 9 40 13 Q43 15 43.6 18 L8 30Z" fill="url(#g15)"/>
<ellipse cx="24.4" cy="26.4" rx="22" ry="9.8" transform="rotate(-24 24.4 26.4)" fill="url(#g14)"/>
<ellipse cx="26.6" cy="29.8" rx="12" ry="5.6" transform="rotate(-24 26.6 29.8)" fill="url(#g16)"/></svg>
<svg style="position:absolute;left:11.900000000000002px;top:403.6px" width="12.6" height="12.6" viewBox="0 0 12.8 12.8"><rect x="0.4" y="0.4" width="12" height="12" fill="#fcfcfc" stroke="#cfcfcf" stroke-width="0.7"/><path d="M3 11.6 Q2.4 6.4 6.4 5.2 L5.4 3 L10.8 2.6 L10 8 L8.2 6.6 Q5.6 7.4 6 11.6Z" fill="#2b5cab"/><path d="M5.4 3 L10.8 2.6 L10 8 L8.6 6.4Z" fill="#3a76cc"/></svg>
<span class="dl" style="position:absolute;left:-465.30px;width:1000px;text-align:center;top:418.50px;font-size:11.7px;line-height:15px;color:#fff;letter-spacing:-0.411px;white-space:nowrap;">Яндекс.Диск</span>
<svg style="position:absolute;left:81.7px;top:371.20000000000005px;overflow:visible" width="45" height="45" viewBox="0 0 48 48"><circle cx="24" cy="24" r="21.8" fill="#17181c" stroke="#0aa5fa" stroke-width="2.2"/>
<text x="24.6" y="36.4" font-family="'Liberation Sans',sans-serif" font-weight="bold" font-style="italic" font-size="35.5" fill="#0aa8fc" text-anchor="middle">C</text></svg>
<svg style="position:absolute;left:81.4px;top:403.6px" width="12.6" height="12.6" viewBox="0 0 12.8 12.8"><rect x="0.4" y="0.4" width="12" height="12" fill="#fcfcfc" stroke="#cfcfcf" stroke-width="0.7"/><path d="M3 11.6 Q2.4 6.4 6.4 5.2 L5.4 3 L10.8 2.6 L10 8 L8.2 6.6 Q5.6 7.4 6 11.6Z" fill="#2b5cab"/><path d="M5.4 3 L10.8 2.6 L10 8 L8.6 6.4Z" fill="#3a76cc"/></svg>
<span class="dl" style="position:absolute;left:-395.80px;width:1000px;text-align:center;top:418.50px;font-size:11.7px;line-height:15px;color:#fff;letter-spacing:-0.318px;white-space:nowrap;">Advanced</span><span class="dl" style="position:absolute;left:-395.80px;width:1000px;text-align:center;top:433.50px;font-size:11.7px;line-height:15px;color:#fff;letter-spacing:-0.637px;white-space:nowrap;">SystemCare</span>
<svg style="position:absolute;left:12.200000000000003px;top:462.6px;overflow:visible" width="45" height="45" viewBox="0 0 48 48"><circle cx="24" cy="24.6" r="22.8" fill="#459cfd"/>
<path d="M26.4 1.6 L33.8 3.4 L29 19.6 L46.4 18.8 L26 47 L17 47.2 L23.6 31 L2.4 31 L20 13Z" fill="#f3e468"/>
<path d="M11 20 Q9.6 14 13.6 11.6 Q15 8 19 9.4 Q21 6 25 8 Q29.6 6.6 32 10.4 Q36.6 12.6 36.8 18 Q38.6 22 37.8 27 Q37 31.6 34.4 33.4 L30 14 L14 17Z" fill="#dfcd4a"/>
<path d="M28 9 Q33 11 35 17 Q37 22 36.6 27 Q34 24 33 19 Q31 13 28 9Z" fill="#a89a3a"/>
<path d="M12.4 20.6 Q13.6 16 18 16.6 Q22 13.6 26 15 Q31 14.6 33.4 19 Q35 24 34 29 Q36.6 28 37 31 Q36.6 34.6 33.4 34.6 Q31 41 26 42.6 Q20 44 16.6 39 Q12 33 12.4 20.6Z" fill="#f3dfc2"/>
<path d="M33.4 24 Q36.4 25 36.4 30 Q36 33.6 33.4 33.6Z" fill="#c8ae90"/>
<path d="M13.6 31.4 Q18 34.6 25.6 31 Q26.6 30.4 26 32 Q22 36.6 15 35 Q13.4 33.6 13.6 31.4Z" fill="#9aa0a8" stroke="#4a3a30" stroke-width="0.6"/>
<ellipse cx="15.8" cy="23.4" rx="1" ry="1.5" fill="#1c140e"/><ellipse cx="24.8" cy="23.6" rx="1.1" ry="1.6" fill="#1c140e"/>
<path d="M13.6 20 Q15.6 18.6 17.6 19.8 M22.6 19.6 Q25 18 27.6 19.8" stroke="#5a4826" stroke-width="0.9" fill="none"/><path d="M19.6 23.6 Q17 27 19 28.4" stroke="#3a2a1e" stroke-width="0.9" fill="none"/></svg>
<svg style="position:absolute;left:11.900000000000002px;top:495.0px" width="12.6" height="12.6" viewBox="0 0 12.8 12.8"><rect x="0.4" y="0.4" width="12" height="12" fill="#fcfcfc" stroke="#cfcfcf" stroke-width="0.7"/><path d="M3 11.6 Q2.4 6.4 6.4 5.2 L5.4 3 L10.8 2.6 L10 8 L8.2 6.6 Q5.6 7.4 6 11.6Z" fill="#2b5cab"/><path d="M5.4 3 L10.8 2.6 L10 8 L8.6 6.4Z" fill="#3a76cc"/></svg>
<span class="dl" style="position:absolute;left:-465.30px;width:1000px;text-align:center;top:509.90px;font-size:11.7px;line-height:15px;color:#fff;letter-spacing:-0.264px;white-space:nowrap;">Fallout 4</span>
<svg style="position:absolute;left:81.7px;top:462.6px;overflow:visible" width="45" height="45" viewBox="0 0 48 48"><defs><linearGradient id="g17" x1="0" y1="0" x2="1" y2="0"><stop offset="0" stop-color="#ff5a00"/><stop offset="0.5" stop-color="#ff3d14"/><stop offset="1" stop-color="#f5200c"/></linearGradient></defs>
<path d="M16 0.8 H32.8 L37.6 5.2 L41.6 4.8 L44.6 10 L43 14 L45 17.4 L39.2 35.6 Q38 39.4 36 41.2 L24.4 48.6 L12.8 41.2 Q10.8 39.4 9.6 35.6 L3.8 17.4 L5.8 14 L4.2 10 L7.2 4.8 L11.2 5.2 Z" fill="url(#g17)"/>
<path d="M24.4 7.4 L30 8.8 L35.2 8 L40.6 15.2 L38.2 19.6 L39 22.4 L34 28.6 L34.8 31.2 L31 35 L24.4 31 L17.8 35 L14 31.2 L14.8 28.6 L9.8 22.4 L10.6 19.6 L8.2 15.2 L13.6 8 L18.8 8.8 Z" fill="#fff"/>
<path d="M24.4 32.4 L31.4 36.4 L24.4 41 L17.4 36.4Z" fill="#fff"/>
<path d="M14 12.6 L21 14.8 L20.4 16.2 L15.4 15.6Z M34.8 12.6 L27.8 14.8 L28.4 16.2 L33.4 15.6Z" fill="#ff4a14"/>
<path d="M21.4 15.4 L20.2 23 L16.6 27.4 M27.4 15.4 L28.6 23 L32.2 27.4" fill="none" stroke="#ff4a14" stroke-width="1.3"/>
<path d="M21.4 25.6 L24.4 27.4 L27.4 25.6 L26 29 L24.4 30 L22.8 29Z" fill="#ff4a14"/></svg>
<svg style="position:absolute;left:81.4px;top:495.0px" width="12.6" height="12.6" viewBox="0 0 12.8 12.8"><rect x="0.4" y="0.4" width="12" height="12" fill="#fcfcfc" stroke="#cfcfcf" stroke-width="0.7"/><path d="M3 11.6 Q2.4 6.4 6.4 5.2 L5.4 3 L10.8 2.6 L10 8 L8.2 6.6 Q5.6 7.4 6 11.6Z" fill="#2b5cab"/><path d="M5.4 3 L10.8 2.6 L10 8 L8.6 6.4Z" fill="#3a76cc"/></svg>
<span class="dl" style="position:absolute;left:-395.80px;width:1000px;text-align:center;top:509.90px;font-size:11.7px;line-height:15px;color:#fff;letter-spacing:-0.613px;white-space:nowrap;">Brave</span>
<svg style="position:absolute;left:12.200000000000003px;top:554.0000000000001px;overflow:visible" width="45" height="45" viewBox="0 0 48 48"><defs><linearGradient id="g18" x1="0" y1="0" x2="0" y2="1"><stop offset="0" stop-color="#2a5fc0"/><stop offset="0.55" stop-color="#7fb2ee"/><stop offset="0.8" stop-color="#e8f2ff"/><stop offset="1" stop-color="#16306a"/></linearGradient></defs>
<rect x="2" y="1" width="35" height="44" fill="#f2f2f2" stroke="#d0d0d0" stroke-width="0.8"/><rect x="4.6" y="3.6" width="29.8" height="33" fill="url(#g18)"/>
<path d="M8 10 Q14 6 20 9 Q26 5 30 10 Q24 14 18 12 Q12 15 8 10Z" fill="#e6f0ff" fill-opacity="0.85"/><path d="M4.6 30 Q12 26 20 29 Q28 26 34.4 30 V34 H4.6Z" fill="#f4f8ff"/><rect x="4.6" y="33.4" width="29.8" height="3.2" fill="#122a5e"/>
<path d="M45.6 14.6 L43.8 13 L18 35.6 L20 37.6 Z" fill="#d81e2c"/><path d="M18 35.6 L20 37.6 L15.6 41.6 L14 40Z" fill="#c8c8c8"/><path d="M14 40 L15.6 41.6 Q12 46 8 46.6 Q10 43 14 40Z" fill="#7a5a3a"/></svg>
<svg style="position:absolute;left:11.900000000000002px;top:586.4000000000001px" width="12.6" height="12.6" viewBox="0 0 12.8 12.8"><rect x="0.4" y="0.4" width="12" height="12" fill="#fcfcfc" stroke="#cfcfcf" stroke-width="0.7"/><path d="M3 11.6 Q2.4 6.4 6.4 5.2 L5.4 3 L10.8 2.6 L10 8 L8.2 6.6 Q5.6 7.4 6 11.6Z" fill="#2b5cab"/><path d="M5.4 3 L10.8 2.6 L10 8 L8.6 6.4Z" fill="#3a76cc"/></svg>
<span class="dl" style="position:absolute;left:-465.30px;width:1000px;text-align:center;top:601.30px;font-size:11.7px;line-height:15px;color:#fff;letter-spacing:-0.154px;white-space:nowrap;">paint.net</span>
<svg style="position:absolute;left:81.7px;top:554.0000000000001px;overflow:visible" width="45" height="45" viewBox="0 0 48 48"><path d="M2.6 1.4 H24 Q31 1.4 35 7 V33 H11.6 Q2.6 33 2.6 24Z" fill="#0c4a6e"/>
<path d="M7.8 6.2 H29 Q35 6.2 39 11.4 L44 18 V30 H7.8Z" fill="#ffffff"/>
<path d="M15.2 14.2 H37 Q44 14.2 46.2 21 V46.6 H24.6 Q15.2 46.6 15.2 37.6Z" fill="#08c6e4"/>
<path d="M15.2 23.6 H27 V18.6 L41.8 28 L27 37.4 V32.2 H15.2Z" fill="#fff"/></svg>
<svg style="position:absolute;left:81.4px;top:586.4000000000001px" width="12.6" height="12.6" viewBox="0 0 12.8 12.8"><rect x="0.4" y="0.4" width="12" height="12" fill="#fcfcfc" stroke="#cfcfcf" stroke-width="0.7"/><path d="M3 11.6 Q2.4 6.4 6.4 5.2 L5.4 3 L10.8 2.6 L10 8 L8.2 6.6 Q5.6 7.4 6 11.6Z" fill="#2b5cab"/><path d="M5.4 3 L10.8 2.6 L10 8 L8.6 6.4Z" fill="#3a76cc"/></svg>
<span class="dl" style="position:absolute;left:-395.80px;width:1000px;text-align:center;top:601.30px;font-size:11.7px;line-height:15px;color:#fff;letter-spacing:-0.640px;white-space:nowrap;">Free</span><span class="dl" style="position:absolute;left:-395.80px;width:1000px;text-align:center;top:616.30px;font-size:11.7px;line-height:15px;color:#fff;letter-spacing:-0.328px;white-space:nowrap;">Downloa...</span>
<svg style="position:absolute;left:12.200000000000003px;top:645.4000000000001px;overflow:visible" width="45" height="45" viewBox="0 0 48 48"><defs><linearGradient id="g19" x1="0" y1="0" x2="0" y2="1"><stop offset="0" stop-color="#ff1b2d"/><stop offset="1" stop-color="#c80a1c"/></linearGradient>
<linearGradient id="g20" x1="0" y1="0" x2="0" y2="1"><stop offset="0" stop-color="#b00a14"/><stop offset="0.5" stop-color="#ff4048"/><stop offset="1" stop-color="#ff565c"/></linearGradient></defs>
<path fill-rule="evenodd" d="M24.2 2.8 A21.8 22 0 1 0 24.2 46.800001 A21.8 22 0 1 0 24.2 2.8 Z M24.2 9.2 C30.6 9.2 35.2 15.6 35.2 24.8 C35.2 34 30.6 40.400001 24.2 40.400001 C17.8 40.400001 13.2 34 13.2 24.8 C13.2 15.6 17.8 9.2 24.2 9.2 Z" fill="url(#g19)"/>
<path d="M26 5.4 Q34 4.6 40 11 Q46 18 46 24.8 Q46 33 40 39.4 Q34 45 27 44.2 Q36 40 37.6 24.8 Q36.4 10 26 5.4Z" fill="url(#g20)"/></svg>
<svg style="position:absolute;left:11.900000000000002px;top:677.8000000000001px" width="12.6" height="12.6" viewBox="0 0 12.8 12.8"><rect x="0.4" y="0.4" width="12" height="12" fill="#fcfcfc" stroke="#cfcfcf" stroke-width="0.7"/><path d="M3 11.6 Q2.4 6.4 6.4 5.2 L5.4 3 L10.8 2.6 L10 8 L8.2 6.6 Q5.6 7.4 6 11.6Z" fill="#2b5cab"/><path d="M5.4 3 L10.8 2.6 L10 8 L8.6 6.4Z" fill="#3a76cc"/></svg>
<span class="dl" style="position:absolute;left:-465.30px;width:1000px;text-align:center;top:692.70px;font-size:11.7px;line-height:15px;color:#fff;letter-spacing:-0.308px;white-space:nowrap;">Браузер</span><span class="dl" style="position:absolute;left:-465.30px;width:1000px;text-align:center;top:707.70px;font-size:11.7px;line-height:15px;color:#fff;letter-spacing:-0.304px;white-space:nowrap;">Opera</span>
<svg style="position:absolute;left:81.7px;top:645.4000000000001px;overflow:visible" width="45" height="45" viewBox="0 0 48 48"><defs><radialGradient id="g21" cx="0.4" cy="0.4" r="0.7"><stop offset="0" stop-color="#ffffff"/><stop offset="0.6" stop-color="#c8c8c8"/><stop offset="1" stop-color="#7a7a7a"/></radialGradient></defs>
<path d="M14.6 20 V13 Q14.6 3.6 24 3.6 Q33.4 3.6 33.4 13 V20" fill="none" stroke="#b0b0b0" stroke-width="3.6"/><path d="M14.6 20 V13 Q14.6 3.6 24 3.6 Q33.4 3.6 33.4 13 V20" fill="none" stroke="#e6e6e6" stroke-width="1.4"/>
<circle cx="23" cy="30" r="15.6" fill="#1e1e1e"/><circle cx="23" cy="30" r="13" fill="url(#g21)"/><path d="M23 30 L23 17 A13 13 0 0 1 36 30Z" fill="#2a2a2a" fill-opacity="0.85"/><circle cx="24" cy="22.4" r="1.3" fill="#e0182a"/><g transform="translate(27 24.5) scale(0.98)"><path d="M10 0 Q15 3 20 3 V11 Q19 19 10 23 Q1 19 0 11 V3 Q5 3 10 0Z" fill="#fff"/><path d="M10 1.6 Q14.4 4.2 18.6 4.4 V11 L10 11Z" fill="#f3b229"/><path d="M10 1.6 Q5.6 4.2 1.4 4.4 V11 L10 11Z" fill="#1d74d0"/><path d="M1.4 11.8 Q2.4 18 10 21.4 V11.8Z" fill="#f3b229"/><path d="M18.6 11.8 Q17.6 18 10 21.4 V11.8Z" fill="#1d74d0"/></g></svg>
<svg style="position:absolute;left:81.4px;top:677.8000000000001px" width="12.6" height="12.6" viewBox="0 0 12.8 12.8"><rect x="0.4" y="0.4" width="12" height="12" fill="#fcfcfc" stroke="#cfcfcf" stroke-width="0.7"/><path d="M3 11.6 Q2.4 6.4 6.4 5.2 L5.4 3 L10.8 2.6 L10 8 L8.2 6.6 Q5.6 7.4 6 11.6Z" fill="#2b5cab"/><path d="M5.4 3 L10.8 2.6 L10 8 L8.6 6.4Z" fill="#3a76cc"/></svg>
<span class="dl" style="position:absolute;left:-395.80px;width:1000px;text-align:center;top:692.70px;font-size:11.7px;line-height:15px;color:#fff;letter-spacing:-0.176px;white-space:nowrap;">Protected</span><span class="dl" style="position:absolute;left:-395.80px;width:1000px;text-align:center;top:707.70px;font-size:11.7px;line-height:15px;color:#fff;letter-spacing:-0.194px;white-space:nowrap;">Folder</span>
<svg style="position:absolute;left:12.200000000000003px;top:736.8000000000001px;overflow:visible" width="45" height="45" viewBox="0 0 48 48"><defs><linearGradient id="g22" x1="0" y1="1" x2="1" y2="0"><stop offset="0" stop-color="#7a3cf0"/><stop offset="0.5" stop-color="#3a6cf6"/><stop offset="1" stop-color="#1fd0f5"/></linearGradient>
<linearGradient id="g23" x1="0" y1="1" x2="1" y2="0"><stop offset="0" stop-color="#7d3cf2"/><stop offset="1" stop-color="#4a6af8"/></linearGradient></defs>
<circle cx="24" cy="24" r="22.4" fill="#121216" stroke="url(#g22)" stroke-width="1.9"/>
<g fill="url(#g23)"><path d="M11 17.6 L19 16.4 V23 H11Z"/><path d="M20.4 16.2 L27 15.2 L25 19 L27.6 19.4 L25.6 23 H20.4Z"/><path d="M11 24.4 H19 V31.6 L11 30.4Z"/><path d="M20.4 24.4 H25 Q25 29 23 32.2 L20.4 31.8Z"/></g>
<path d="M31.6 10.6 L39 19.6 H34.8 Q35 28.6 25.6 34 Q30 27.6 29 19.6 H25Z" fill="#1fbff2"/></svg>
<svg style="position:absolute;left:11.900000000000002px;top:769.2px" width="12.6" height="12.6" viewBox="0 0 12.8 12.8"><rect x="0.4" y="0.4" width="12" height="12" fill="#fcfcfc" stroke="#cfcfcf" stroke-width="0.7"/><path d="M3 11.6 Q2.4 6.4 6.4 5.2 L5.4 3 L10.8 2.6 L10 8 L8.2 6.6 Q5.6 7.4 6 11.6Z" fill="#2b5cab"/><path d="M5.4 3 L10.8 2.6 L10 8 L8.6 6.4Z" fill="#3a76cc"/></svg>
<span class="dl" style="position:absolute;left:-465.30px;width:1000px;text-align:center;top:784.10px;font-size:11.7px;line-height:15px;color:#fff;letter-spacing:0.158px;white-space:nowrap;">IObit</span><span class="dl" style="position:absolute;left:-465.30px;width:1000px;text-align:center;top:799.10px;font-size:11.7px;line-height:15px;color:#fff;letter-spacing:-0.391px;white-space:nowrap;">Softwa...</span>
<svg style="position:absolute;left:81.7px;top:736.8000000000001px;overflow:visible" width="45" height="45" viewBox="0 0 48 48"><defs><linearGradient id="g24" x1="0" y1="0" x2="1" y2="1"><stop offset="0" stop-color="#ffffff"/><stop offset="1" stop-color="#eaeaea"/></linearGradient></defs>
<path d="M8.6 3 H30 L40 12.6 V44.6 H8.6Z" fill="url(#g24)" stroke="#e0e0e0" stroke-width="0.6"/><path d="M30 3 V12.6 H40Z" fill="#dedede"/>
<path d="M22.4 32.3 L22.4 36.9 L18.6 38.3 L18.9 37.4 L20.7 41.0 L17.4 44.3 L13.8 42.5 L14.7 42.2 L13.3 46.0 L8.7 46.0 L7.3 42.2 L8.2 42.5 L4.6 44.3 L1.3 41.0 L3.1 37.4 L3.4 38.3 L-0.4 36.9 L-0.4 32.3 L3.4 30.9 L3.1 31.8 L1.3 28.2 L4.6 24.9 L8.2 26.7 L7.3 27.0 L8.7 23.2 L13.3 23.2 L14.7 27.0 L13.8 26.7 L17.4 24.9 L20.7 28.2 L18.9 31.8 L18.6 30.9Z" fill="#d3d9de" stroke="#b4bcc4" stroke-width="0.6"/><circle cx="11" cy="34.6" r="4.2" fill="#f8f8f8" stroke="#a8b0b8" stroke-width="0.8"/><path d="M8.4 31.6 A4.2 4.2 0 0 0 8.4 37.6" fill="none" stroke="#8e969e" stroke-width="1.5"/></svg>
<span class="dl" style="position:absolute;left:-395.80px;width:1000px;text-align:center;top:784.10px;font-size:11.7px;line-height:15px;color:#fff;letter-spacing:-0.289px;white-space:nowrap;">BethINI</span>
<svg style="position:absolute;left:12.200000000000003px;top:828.2px;overflow:visible" width="45" height="45" viewBox="0 0 48 48"><rect x="0.2" y="0.6" width="47.6" height="47" rx="6.4" fill="#101112"/>
<g fill="none" stroke="#e8222c" stroke-width="2"><path d="M5 12 V9 Q5 6 8 6 H11"/><path d="M37 6 H40 Q43 6 43 9 V12"/><path d="M5 37 V40 Q5 43 8 43 H11"/><path d="M37 43 H40 Q43 43 43 40 V37"/></g>
<path d="M12 14 H31 Q35 14 35 18 V20.6 L42 16.6 V32.4 L35 28.4 V31 Q35 35 31 35 H12 Q8 35 8 31 V18 Q8 14 12 14Z" fill="#e12434" stroke="#fff" stroke-width="1.4"/>
<path d="M22 24.6 Q18 19.6 15 21.6 Q12.6 24.6 15 27.6 Q18 29.6 22 24.6 Q26 19.6 29.6 21.6 Q32 24.6 29.6 27.6 Q26 29.6 22 24.6Z" fill="none" stroke="#fff" stroke-width="1.8"/></svg>
<svg style="position:absolute;left:11.900000000000002px;top:860.6px" width="12.6" height="12.6" viewBox="0 0 12.8 12.8"><rect x="0.4" y="0.4" width="12" height="12" fill="#fcfcfc" stroke="#cfcfcf" stroke-width="0.7"/><path d="M3 11.6 Q2.4 6.4 6.4 5.2 L5.4 3 L10.8 2.6 L10 8 L8.2 6.6 Q5.6 7.4 6 11.6Z" fill="#2b5cab"/><path d="M5.4 3 L10.8 2.6 L10 8 L8.6 6.4Z" fill="#3a76cc"/></svg>
<span class="dl" style="position:absolute;left:-465.30px;width:1000px;text-align:center;top:875.50px;font-size:11.7px;line-height:15px;color:#fff;letter-spacing:-0.553px;white-space:nowrap;">iFun Screen</span><span class="dl" style="position:absolute;left:-465.30px;width:1000px;text-align:center;top:890.50px;font-size:11.7px;line-height:15px;color:#fff;letter-spacing:-0.328px;white-space:nowrap;">Recorder</span>
<svg style="position:absolute;left:81.7px;top:828.2px;overflow:visible" width="45" height="45" viewBox="0 0 48 48"><defs><radialGradient id="g25" cx="0.7" cy="0.15" r="1"><stop offset="0" stop-color="#fff36a"/><stop offset="0.35" stop-color="#ffb21e"/><stop offset="0.65" stop-color="#ff5a2a"/><stop offset="1" stop-color="#e8226a"/></radialGradient>
<radialGradient id="g26" cx="0.45" cy="0.4" r="0.6"><stop offset="0" stop-color="#9a5cf5"/><stop offset="1" stop-color="#5a2ad0"/></radialGradient>
<linearGradient id="g27" x1="0" y1="0" x2="1" y2="1"><stop offset="0" stop-color="#ffd23a"/><stop offset="1" stop-color="#ff7a1a"/></linearGradient></defs>
<path d="M26 1 Q31 4 32.6 9.6 Q38 10 41 15 Q46.6 23 43.6 33 Q39 45.6 25 46.6 Q10 46 4.6 33 Q1.6 23 7 14 Q7.6 17 9 18.6 Q10.6 12 15.6 8.6 Q15 12 17 14.6 Q21 10 22 6.6 Q23 3 26 1Z" fill="url(#g25)"/>
<circle cx="24.6" cy="27" r="11" fill="url(#g26)"/>
<path d="M9 18.6 Q13 15 18.6 16.6 Q22 18 24.6 17.4 Q27 17.6 26.6 19.6 Q24 22 21 22 Q19 26 22 29.6 Q16 30 13.4 25 Q10 24 9 18.6Z" fill="url(#g27)"/>
<path d="M32.6 9.6 Q38 16 37 23 Q36 32 27 36 Q20 38 14 33 Q20 41 30 38.6 Q40 35 41 24 Q41 15 32.6 9.6Z" fill="#ffbd2e" fill-opacity="0.9"/></svg>
<svg style="position:absolute;left:81.4px;top:860.6px" width="12.6" height="12.6" viewBox="0 0 12.8 12.8"><rect x="0.4" y="0.4" width="12" height="12" fill="#fcfcfc" stroke="#cfcfcf" stroke-width="0.7"/><path d="M3 11.6 Q2.4 6.4 6.4 5.2 L5.4 3 L10.8 2.6 L10 8 L8.2 6.6 Q5.6 7.4 6 11.6Z" fill="#2b5cab"/><path d="M5.4 3 L10.8 2.6 L10 8 L8.6 6.4Z" fill="#3a76cc"/></svg>
<span class="dl" style="position:absolute;left:-395.80px;width:1000px;text-align:center;top:875.50px;font-size:11.7px;line-height:15px;color:#fff;letter-spacing:-0.180px;white-space:nowrap;">Firefox</span>
<svg style="position:absolute;left:12.200000000000003px;top:919.6px;overflow:visible" width="45" height="45" viewBox="0 0 48 48"><circle cx="24" cy="24" r="22" fill="#2b2d3c" stroke="#23d17c" stroke-width="2.3"/>
<text x="24.4" y="36.6" font-family="'Liberation Sans',sans-serif" font-style="italic" font-size="33" fill="#2bdb82" text-anchor="middle">U</text></svg>
<svg style="position:absolute;left:11.900000000000002px;top:952.0px" width="12.6" height="12.6" viewBox="0 0 12.8 12.8"><rect x="0.4" y="0.4" width="12" height="12" fill="#fcfcfc" stroke="#cfcfcf" stroke-width="0.7"/><path d="M3 11.6 Q2.4 6.4 6.4 5.2 L5.4 3 L10.8 2.6 L10 8 L8.2 6.6 Q5.6 7.4 6 11.6Z" fill="#2b5cab"/><path d="M5.4 3 L10.8 2.6 L10 8 L8.6 6.4Z" fill="#3a76cc"/></svg>
<span class="dl" style="position:absolute;left:-465.30px;width:1000px;text-align:center;top:966.90px;font-size:11.7px;line-height:15px;color:#fff;letter-spacing:0.158px;white-space:nowrap;">IObit</span><span class="dl" style="position:absolute;left:-465.30px;width:1000px;text-align:center;top:981.90px;font-size:11.7px;line-height:15px;color:#fff;letter-spacing:-0.207px;white-space:nowrap;">Uninstaller</span>
<svg style="position:absolute;left:81.7px;top:927.2px;overflow:visible" width="45" height="45" viewBox="0 0 48 48"><path d="M0.4 5 Q0.2 2.6 2.6 2.6 H46 Q48.2 2.6 47.8 5 L46 20 Q45.6 22.4 43 22.4 H6 Q4 22.4 3.4 20Z" fill="#030303"/>
<path d="M13.6 23.4 L44.8 21.6 L43 29.4Z" fill="#12c636"/>
<text x="25.4" y="15.2" font-family="'Liberation Sans',sans-serif" font-weight="bold" font-style="italic" font-size="13.6" fill="#fff" stroke="#fff" stroke-width="0.5" text-anchor="middle" letter-spacing="-0.7">NMM</text>
<rect x="10" y="17.6" width="23" height="0.8" fill="#8a8a8a"/></svg>
<svg style="position:absolute;left:81.4px;top:952.0px" width="12.6" height="12.6" viewBox="0 0 12.8 12.8"><rect x="0.4" y="0.4" width="12" height="12" fill="#fcfcfc" stroke="#cfcfcf" stroke-width="0.7"/><path d="M3 11.6 Q2.4 6.4 6.4 5.2 L5.4 3 L10.8 2.6 L10 8 L8.2 6.6 Q5.6 7.4 6 11.6Z" fill="#2b5cab"/><path d="M5.4 3 L10.8 2.6 L10 8 L8.6 6.4Z" fill="#3a76cc"/></svg>
<span class="dl" style="position:absolute;left:-395.80px;width:1000px;text-align:center;top:966.90px;font-size:11.7px;line-height:15px;color:#fff;letter-spacing:0.019px;white-space:nowrap;">NMM</span>
<svg style="position:absolute;left:1826.8px;top:116.80000000000001px;filter:drop-shadow(1px 1px 1px rgba(0,0,0,0.5))" width="41" height="22.6" viewBox="0 0 41 23" preserveAspectRatio="none"><rect width="41" height="23" fill="#1c2622"/><rect x="20" y="0" width="21" height="23" fill="#3a3f3c"/><rect x="26" y="2" width="12" height="18" fill="#4d4a44"/><rect x="3" y="4" width="14" height="10" fill="#0d1511"/><rect x="5" y="9" width="9" height="2" fill="#b8c4b8"/><rect x="10" y="5" width="2" height="4" fill="#d8e0d8"/><rect x="3" y="17" width="14" height="2.4" fill="#4d9a4a"/></svg>
<span class="dl" style="position:absolute;left:1347.30px;width:1000px;text-align:center;top:144.30px;font-size:11.7px;line-height:15px;color:#fff;letter-spacing:-0.332px;white-space:nowrap;">ScreenShot4</span>
<svg style="position:absolute;left:1825.3px;top:188.4px;overflow:visible" width="45" height="45" viewBox="0 0 48 48"><defs><linearGradient id="g28" x1="0" y1="0" x2="1" y2="1"><stop offset="0" stop-color="#ffffff"/><stop offset="1" stop-color="#eaeaea"/></linearGradient></defs>
<path d="M8.6 3 H30 L40 12.6 V44.6 H8.6Z" fill="url(#g28)" stroke="#e0e0e0" stroke-width="0.6"/><path d="M30 3 V12.6 H40Z" fill="#dedede"/>
<path d="M22.4 32.3 L22.4 36.9 L18.6 38.3 L18.9 37.4 L20.7 41.0 L17.4 44.3 L13.8 42.5 L14.7 42.2 L13.3 46.0 L8.7 46.0 L7.3 42.2 L8.2 42.5 L4.6 44.3 L1.3 41.0 L3.1 37.4 L3.4 38.3 L-0.4 36.9 L-0.4 32.3 L3.4 30.9 L3.1 31.8 L1.3 28.2 L4.6 24.9 L8.2 26.7 L7.3 27.0 L8.7 23.2 L13.3 23.2 L14.7 27.0 L13.8 26.7 L17.4 24.9 L20.7 28.2 L18.9 31.8 L18.6 30.9Z" fill="#d3d9de" stroke="#b4bcc4" stroke-width="0.6"/><circle cx="11" cy="34.6" r="4.2" fill="#f8f8f8" stroke="#a8b0b8" stroke-width="0.8"/><path d="M8.4 31.6 A4.2 4.2 0 0 0 8.4 37.6" fill="none" stroke="#8e969e" stroke-width="1.5"/></svg>
<span class="dl" style="position:absolute;left:1347.30px;width:1000px;text-align:center;top:235.70px;font-size:11.7px;line-height:15px;color:#fff;letter-spacing:0.212px;white-space:nowrap;">cbp</span>
<svg style="position:absolute;left:1826.8px;top:299.6px;filter:drop-shadow(1px 1px 1px rgba(0,0,0,0.5))" width="41" height="22.6" viewBox="0 0 41 23" preserveAspectRatio="none"><rect width="41" height="23" fill="#2a1610"/><rect x="3" y="1" width="6" height="20" fill="#d9a890"/><rect x="10" y="1" width="5" height="20" fill="#8a3a22"/><rect x="17" y="1" width="10" height="20" fill="#e0b8a0"/><rect x="20" y="3" width="4" height="16" fill="#a8482a"/><rect x="29" y="1" width="6" height="20" fill="#6a2a1a"/><rect x="36" y="1" width="5" height="22" fill="#15100c"/></svg>
<span class="dl" style="position:absolute;left:1347.30px;width:1000px;text-align:center;top:327.10px;font-size:11.7px;line-height:15px;color:#fff;letter-spacing:0.047px;white-space:nowrap;">Fallout4</span><span class="dl" style="position:absolute;left:1347.30px;width:1000px;text-align:center;top:342.10px;font-size:11.7px;line-height:15px;color:#fff;letter-spacing:-0.326px;white-space:nowrap;">2020-07-...</span>
<svg style="position:absolute;left:1826.8px;top:391.0px;filter:drop-shadow(1px 1px 1px rgba(0,0,0,0.5))" width="41" height="22.6" viewBox="0 0 41 23" preserveAspectRatio="none"><rect width="41" height="23" fill="#1a1210"/><ellipse cx="19" cy="12" rx="14" ry="8" fill="#c8a898"/><ellipse cx="16" cy="11" rx="7" ry="4" fill="#ead8cc"/><path d="M8 16 Q18 8 30 14" stroke="#7a4a3a" stroke-width="1.4" fill="none"/><rect x="36" y="0" width="5" height="23" fill="#0f0c0a"/></svg>
<span class="dl" style="position:absolute;left:1347.30px;width:1000px;text-align:center;top:418.50px;font-size:11.7px;line-height:15px;color:#fff;letter-spacing:-0.507px;white-space:nowrap;">333</span>
<svg style="position:absolute;left:1826.8px;top:573.8000000000001px;filter:drop-shadow(1px 1px 1px rgba(0,0,0,0.5))" width="41" height="22.6" viewBox="0 0 41 23" preserveAspectRatio="none"><rect width="41" height="23" fill="#0b3f98"/><rect x="0" y="0" width="41" height="3.6" fill="#f4f4f4"/><rect x="0" y="12" width="41" height="11" fill="#06286e"/><circle cx="28" cy="15" r="5" fill="none" stroke="#3a8ae0" stroke-width="0.6"/><rect x="0" y="21.6" width="41" height="1.4" fill="#1a1f2c"/></svg>
<span class="dl" style="position:absolute;left:1347.30px;width:1000px;text-align:center;top:601.30px;font-size:11.7px;line-height:15px;color:#fff;letter-spacing:-0.019px;white-space:nowrap;">Снимок</span><span class="dl" style="position:absolute;left:1347.30px;width:1000px;text-align:center;top:616.30px;font-size:11.7px;line-height:15px;color:#fff;letter-spacing:-0.103px;white-space:nowrap;">экрана (92)</span>
<svg style="position:absolute;left:1824.8px;top:736.8000000000001px" width="45" height="45" viewBox="0 0 48 48">
<defs><linearGradient id="fb1" x1="0" y1="0" x2="1" y2="1"><stop offset="0" stop-color="#fde894"/><stop offset="1" stop-color="#f4cf5e"/></linearGradient></defs>
<path d="M9.2 5.7 H33.4 L34 7 V42 L9.2 40Z" fill="#f3cf66"/>
<path d="M15.3 8.3 L30.3 12.3 V47 L17.6 43.7Z" fill="#f2f3f6" stroke="#d4d6da" stroke-width="0.5"/>
<path d="M19 13 L26 15 L28.4 19 V42" fill="none" stroke="#e0e2e6" stroke-width="0.7"/>
<path d="M26.6 9.2 L39.7 10.9 V43.7 L30.6 46.6 V12.3Z" fill="#fbfbfc" stroke="#dcdde0" stroke-width="0.5"/>
<path d="M31.6 14 L36 15.4 L37 19 V41" fill="none" stroke="#e4e0d0" stroke-width="0.7"/>
<path d="M9.2 5.7 L17.6 10.9 V46.2 L9.2 40Z" fill="url(#fb1)"/>
</svg>
<span class="dl" style="position:absolute;left:1347.30px;width:1000px;text-align:center;top:784.10px;font-size:11.7px;line-height:15px;color:#fff;letter-spacing:-0.200px;white-space:nowrap;">Новая папка</span><span class="dl" style="position:absolute;left:1347.30px;width:1000px;text-align:center;top:799.10px;font-size:11.7px;line-height:15px;color:#fff;letter-spacing:-0.434px;white-space:nowrap;">(5)</span></div>
<div id="widget"><div style="position:absolute;left:1731px;top:65px;width:168px;height:21px;border-radius:10.5px;background:#1b2148"></div>
<div style="position:absolute;left:1731.5px;top:61px;width:25px;height:25px;border-radius:50%;background:#1b2148"></div>
<svg style="position:absolute;left:1738.5px;top:65.5px" width="10" height="18" viewBox="0 0 10 18"><path d="M5 0.6 Q8.6 3.6 8 9.6 L9.2 12.4 H0.8 L2 9.6 Q1.4 3.6 5 0.6Z" fill="#2a66f0"/><path d="M4.4 12.4 H5.6 V17.6 H4.4Z" fill="#2a66f0"/><circle cx="5" cy="6" r="1.3" fill="#1b2148"/></svg>
<span style="position:absolute;left:1767.50px;top:68.10px;font-size:11.6px;line-height:15px;color:#ffffff;letter-spacing:-1.028px;font-weight:700;white-space:nowrap;">RAM: 16%</span>
<span style="position:absolute;left:1825.00px;top:68.10px;font-size:11.6px;line-height:15px;color:#ffffff;letter-spacing:-1.078px;font-weight:700;white-space:nowrap;">CPU: 1%</span>
<div style="position:absolute;left:1882.5px;top:67.5px;width:16px;height:16px;border-radius:50%;background:#2747b4"></div>
<svg style="position:absolute;left:1885px;top:70.5px" width="11" height="10" viewBox="0 0 11 10"><path d="M0.6 5 H9.6 M5.8 1 L9.8 5 L5.8 9" fill="none" stroke="#3f7df5" stroke-width="1.5"/></svg></div>
<div id="win"><div id="explorer" style="position:absolute;left:190px;top:85px;width:1641px;height:546px;background:#fff;box-shadow:0 0 0 1px rgba(40,110,200,0.5), 0 2px 10px rgba(0,0,30,0.25)"></div>
<svg style="position:absolute;left:198px;top:92.5px" width="10" height="13" viewBox="0 0 10 13"><path d="M0.5 1.2 L5.5 0.3 L5.5 11 L0.5 12.2 Z" fill="#edc964"/><path d="M2 1.5 L8.2 1 Q9 1 9 1.8 L9.3 10.6 Q9.3 11.3 8.6 11.4 L2.5 12.4 Z" fill="#fbe08e"/><path d="M0.5 1.2 L2 1.5 L2.5 12.4 L0.5 12.2Z" fill="#e4b84c"/></svg>
<div style="position:absolute;left:215px;top:93px;width:1px;height:12px;background:#a0a0a0"></div>
<svg style="position:absolute;left:227px;top:92px" width="12" height="14" viewBox="0 0 12 14"><path d="M0.5 0.5 H8 L11.5 4 V13.5 H0.5 Z" fill="#fff" stroke="#8c8c8c"/><path d="M8 0.5 V4 H11.5" fill="none" stroke="#8c8c8c"/><path d="M2.6 7.4 L5 10 L9.4 4.6" fill="none" stroke="#e8612c" stroke-width="1.6"/></svg>
<svg style="position:absolute;left:246.5px;top:92.5px" width="10" height="13" viewBox="0 0 10 13"><path d="M0.5 1.2 L5.5 0.3 L5.5 11 L0.5 12.2 Z" fill="#edc964"/><path d="M2 1.5 L8.2 1 Q9 1 9 1.8 L9.3 10.6 Q9.3 11.3 8.6 11.4 L2.5 12.4 Z" fill="#fbe08e"/><path d="M0.5 1.2 L2 1.5 L2.5 12.4 L0.5 12.2Z" fill="#e4b84c"/></svg>
<svg style="position:absolute;left:264px;top:96px" width="9" height="8" viewBox="0 0 9 8"><rect x="1.5" y="1" width="6" height="1.2" fill="#222"/><path d="M1.5 3.6 H7.5 L4.5 6.8 Z" fill="#222"/></svg>
<div style="position:absolute;left:280px;top:92px;width:1px;height:14px;background:#b4b4b4"></div>
<span style="position:absolute;left:286.80px;top:90.50px;font-size:11.3px;line-height:15px;color:#8e8e8e;letter-spacing:-0.021px;white-space:nowrap;">Новая папка (5)</span>
<div style="position:absolute;left:1716px;top:97.3px;width:9.5px;height:1px;background:#8a8a8a"></div>
<div style="position:absolute;left:1759.5px;top:93.5px;width:8.5px;height:8.5px;border:1px solid #8a8a8a;box-sizing:content-box"></div>
<svg style="position:absolute;left:1803px;top:93px" width="11" height="11" viewBox="0 0 11 11"><path d="M0.7 0.7 L10.3 10.3 M10.3 0.7 L0.7 10.3" stroke="#8a8a8a" stroke-width="1"/></svg>
<div style="position:absolute;left:190px;top:112.5px;width:52px;height:21px;background:#0a64b6"></div>
<span style="position:absolute;left:205.20px;top:116.30px;font-size:10.6px;line-height:14px;color:#ffffff;letter-spacing:-1.015px;white-space:nowrap;">Файл</span>
<span style="position:absolute;left:254.80px;top:116.30px;font-size:10.6px;line-height:14px;color:#3c3c3c;letter-spacing:-0.592px;white-space:nowrap;">Главная</span>
<span style="position:absolute;left:317.30px;top:116.30px;font-size:10.6px;line-height:14px;color:#3c3c3c;letter-spacing:-0.653px;white-space:nowrap;">Поделиться</span>
<span style="position:absolute;left:396.00px;top:116.30px;font-size:10.6px;line-height:14px;color:#3c3c3c;letter-spacing:-1.126px;white-space:nowrap;">Вид</span>
<div style="position:absolute;left:190px;top:133px;width:1641px;height:1px;background:#e3e3e3"></div>
<svg style="position:absolute;left:1796px;top:120px" width="11" height="7" viewBox="0 0 11 7"><path d="M0.8 0.8 L5.5 5.6 L10.2 0.8" fill="none" stroke="#8a8a8a" stroke-width="1.1"/></svg>
<div style="position:absolute;left:1813.5px;top:115.5px;width:15px;height:15px;border-radius:50%;background:#0b69c4"></div>
<span style="position:absolute;left:1321.00px;width:1000px;text-align:center;top:116.00px;font-size:11.5px;line-height:15px;color:#ffffff;font-weight:700;white-space:nowrap;">?</span>
<svg style="position:absolute;left:201px;top:147px" width="13" height="11" viewBox="0 0 13 11"><path d="M12 5.5 H1.5 M5.8 1 L1.3 5.5 L5.8 10" fill="none" stroke="#cfcfcf" stroke-width="1.2"/></svg>
<svg style="position:absolute;left:230px;top:147px" width="13" height="11" viewBox="0 0 13 11"><path d="M1 5.5 H11.5 M7.2 1 L11.7 5.5 L7.2 10" fill="none" stroke="#cfcfcf" stroke-width="1.2"/></svg>
<svg style="position:absolute;left:255.5px;top:150.5px" width="8" height="5" viewBox="0 0 8 5"><path d="M0.7 0.7 L4 4 L7.3 0.7" fill="none" stroke="#d0d0d0" stroke-width="1.1"/></svg>
<svg style="position:absolute;left:273px;top:147.5px" width="11" height="13" viewBox="0 0 11 13"><path d="M5.5 12.5 V1.5 M1 6 L5.5 1.3 L10 6" fill="none" stroke="#555" stroke-width="1.3"/></svg>
<div style="position:absolute;left:290px;top:138px;width:1373px;height:28px;border:1px solid #d9d9d9;box-sizing:border-box;background:#fff"></div>
<div style="position:absolute;left:1633.5px;top:139px;width:1px;height:26px;background:#e1e1e1"></div>
<svg style="position:absolute;left:294.5px;top:146px" width="10" height="13" viewBox="0 0 10 13"><path d="M0.5 1.2 L5.5 0.3 L5.5 11 L0.5 12.2 Z" fill="#edc964"/><path d="M2 1.5 L8.2 1 Q9 1 9 1.8 L9.3 10.6 Q9.3 11.3 8.6 11.4 L2.5 12.4 Z" fill="#fbe08e"/><path d="M0.5 1.2 L2 1.5 L2.5 12.4 L0.5 12.2Z" fill="#e4b84c"/></svg>
<svg style="position:absolute;left:313.5px;top:148.5px" width="6" height="8" viewBox="0 0 6 8"><path d="M1 0.8 L4.6 4 L1 7.2" fill="none" stroke="#555" stroke-width="1.1"/></svg>
<span style="position:absolute;left:326.50px;top:145.50px;font-size:11.8px;line-height:15px;color:#1e1e1e;letter-spacing:-0.245px;white-space:nowrap;">Новая папка (5)</span>
<svg style="position:absolute;left:1615.5px;top:150.5px" width="9" height="6" viewBox="0 0 9 6"><path d="M0.8 0.8 L4.5 4.6 L8.2 0.8" fill="none" stroke="#444" stroke-width="1.3"/></svg>
<svg style="position:absolute;left:1642.8px;top:145.3px" width="13" height="14" viewBox="0 0 13 14"><path d="M8.95 3.26 A4.9 4.9 0 1 1 4.05 3.26" fill="none" stroke="#666" stroke-width="1.25"/><path d="M2.6 1.3 L6.8 1.9 L4.6 5.2 Z" fill="#666"/></svg>
<div style="position:absolute;left:1672.5px;top:138px;width:149px;height:28px;border:1px solid #d9d9d9;box-sizing:border-box;background:#fff"></div>
<svg style="position:absolute;left:1685px;top:146px" width="13" height="13" viewBox="0 0 13 13"><circle cx="8" cy="4.8" r="3.6" fill="none" stroke="#a3a3a3" stroke-width="1"/><path d="M5.4 7.4 L1 12" stroke="#a3a3a3" stroke-width="1.1"/></svg>
<span style="position:absolute;left:1710.80px;top:145.50px;font-size:11.8px;line-height:15px;color:#7a7a7a;letter-spacing:-0.302px;white-space:nowrap;">Поиск: Новая папк...</span>
<div style="position:absolute;left:190px;top:188px;width:312px;height:21.6px;background:#d9d9d9"></div>
<div style="position:absolute;left:502.5px;top:172px;width:15px;height:437px;background:#f0f0f0"></div>
<div style="position:absolute;left:502.5px;top:188px;width:15px;height:278.5px;background:#c2c2c2"></div>
<svg style="position:absolute;left:505.5px;top:177px" width="9" height="6" viewBox="0 0 9 6"><path d="M0.8 5 L4.5 1.2 L8.2 5" fill="none" stroke="#505050" stroke-width="1.5"/></svg>
<svg style="position:absolute;left:505.5px;top:597px" width="9" height="6" viewBox="0 0 9 6"><path d="M0.8 1 L4.5 4.8 L8.2 1" fill="none" stroke="#505050" stroke-width="1.5"/></svg>
<div id="navclip" style="position:absolute;left:190px;top:172px;width:312px;height:437px;overflow:hidden">
<span style="position:absolute;left:41.00px;top:19.20px;font-size:11.7px;line-height:15px;color:#1e1e1e;letter-spacing:-0.383px;white-space:nowrap;">Быстрый доступ</span>
<svg style="position:absolute;left:22.5px;top:19.0px" width="16" height="16" viewBox="0 0 16 16"><path d="M8 1 L9.9 5.6 L14.8 6 L11.1 9.2 L12.3 14 L8 11.4 L3.7 14 L4.9 9.2 L1.2 6 L6.1 5.6 Z" fill="#2e9df2"/><path d="M1 11 L5 9.5 M0.5 8.5 L3.6 8 " stroke="#7cc4f7" stroke-width="1" fill="none"/></svg>
<span style="position:absolute;left:48.50px;top:41.70px;font-size:11.7px;line-height:15px;color:#1e1e1e;letter-spacing:-0.287px;white-space:nowrap;">Рабочий стол</span>
<svg style="position:absolute;left:29.5px;top:43.0px" width="16" height="13" viewBox="0 0 16 13"><rect x="0.5" y="1.5" width="14" height="9.5" fill="#2f9cf4" stroke="#1a78d2"/><rect x="2" y="9" width="11" height="1" fill="#1565c0"/></svg>
<svg style="position:absolute;left:299px;top:43.5px" width="11" height="11" viewBox="0 0 11 11"><path d="M6.6 0.6 L10.4 4.4 L9.2 4.9 L7.2 6.9 L7 9 L5.9 9.6 L3.9 7.6 L0.8 10.4 L0.6 10.2 L3.4 7.1 L1.4 5.1 L2 4 L4.1 3.8 L6.1 1.8 Z" fill="#7d8791"/></svg>
<span style="position:absolute;left:48.50px;top:64.20px;font-size:11.7px;line-height:15px;color:#1e1e1e;letter-spacing:-0.261px;white-space:nowrap;">Загрузки</span>
<svg style="position:absolute;left:30.5px;top:65.0px" width="14" height="14" viewBox="0 0 14 14"><path d="M4.5 0.8 H9.5 V6 H13 L7 12.5 L1 6 H4.5 Z" fill="#2b8ae8"/><path d="M4.5 0.8 H9.5 V3 H4.5Z" fill="#4ea4f5"/></svg>
<svg style="position:absolute;left:299px;top:66px" width="11" height="11" viewBox="0 0 11 11"><path d="M6.6 0.6 L10.4 4.4 L9.2 4.9 L7.2 6.9 L7 9 L5.9 9.6 L3.9 7.6 L0.8 10.4 L0.6 10.2 L3.4 7.1 L1.4 5.1 L2 4 L4.1 3.8 L6.1 1.8 Z" fill="#7d8791"/></svg>
<span style="position:absolute;left:48.50px;top:86.70px;font-size:11.7px;line-height:15px;color:#1e1e1e;letter-spacing:-0.257px;white-space:nowrap;">Документы</span>
<svg style="position:absolute;left:30.5px;top:87.5px" width="13" height="14" viewBox="0 0 13 14"><path d="M1.5 0.5 H8 L11.5 4 V13.5 H1.5 Z" fill="#fff" stroke="#a0a0a0"/><path d="M8 0.5 V4 H11.5" fill="#eee" stroke="#a0a0a0"/><path d="M3.5 3 H7 M3.5 5 H7 M3.5 7 H9.5 M3.5 9 H9.5" stroke="#5b9bd8" stroke-width="0.9"/><rect x="3.3" y="2.3" width="3.4" height="3.4" fill="#6fb0ea"/></svg>
<svg style="position:absolute;left:299px;top:88.5px" width="11" height="11" viewBox="0 0 11 11"><path d="M6.6 0.6 L10.4 4.4 L9.2 4.9 L7.2 6.9 L7 9 L5.9 9.6 L3.9 7.6 L0.8 10.4 L0.6 10.2 L3.4 7.1 L1.4 5.1 L2 4 L4.1 3.8 L6.1 1.8 Z" fill="#7d8791"/></svg>
<span style="position:absolute;left:48.50px;top:109.20px;font-size:11.7px;line-height:15px;color:#1e1e1e;letter-spacing:-0.048px;white-space:nowrap;">Изображения</span>
<svg style="position:absolute;left:29.5px;top:111.0px" width="15" height="12" viewBox="0 0 15 12"><rect x="0.5" y="0.5" width="14" height="11" fill="#fff" stroke="#a8a8a8"/><rect x="2" y="2" width="11" height="8" fill="#bfe0f8"/><path d="M2 10 L2 7 Q5 4.5 8 7 T13 7.5 V10Z" fill="#3c6e47"/><path d="M2 10 L2 8.5 Q6 7 13 9.2 V10Z" fill="#2a4f63"/></svg>
<svg style="position:absolute;left:299px;top:111px" width="11" height="11" viewBox="0 0 11 11"><path d="M6.6 0.6 L10.4 4.4 L9.2 4.9 L7.2 6.9 L7 9 L5.9 9.6 L3.9 7.6 L0.8 10.4 L0.6 10.2 L3.4 7.1 L1.4 5.1 L2 4 L4.1 3.8 L6.1 1.8 Z" fill="#7d8791"/></svg>
<span style="position:absolute;left:48.50px;top:131.70px;font-size:11.7px;line-height:15px;color:#1e1e1e;letter-spacing:-0.144px;white-space:nowrap;">common</span>
<div style="position:absolute;left:30.5px;top:132.0px;opacity:1"><svg width="12" height="15" viewBox="0 0 12 15" style="display:block"><path d="M1 1.5 L6 0.6 L6 13 L1 14 Z" fill="#ecc660"/><path d="M2.6 1.9 L9.6 1.2 Q10.6 1.2 10.6 2.2 L10.9 12 Q10.9 12.9 10 13 L3 14.3 Z" fill="#fbe192"/><path d="M1 1.5 L2.6 1.9 L3 14.3 L1 14Z" fill="#e2b548"/></svg></div>
<svg style="position:absolute;left:299px;top:133.5px" width="11" height="11" viewBox="0 0 11 11"><path d="M6.6 0.6 L10.4 4.4 L9.2 4.9 L7.2 6.9 L7 9 L5.9 9.6 L3.9 7.6 L0.8 10.4 L0.6 10.2 L3.4 7.1 L1.4 5.1 L2 4 L4.1 3.8 L6.1 1.8 Z" fill="#7d8791"/></svg>
<span style="position:absolute;left:48.50px;top:154.20px;font-size:11.7px;line-height:15px;color:#1e1e1e;letter-spacing:-0.312px;white-space:nowrap;">Локальный диск (C:)</span>
<svg style="position:absolute;left:28.5px;top:155.5px" width="16" height="13" viewBox="0 0 16 13"><path d="M1.5 9.5 L5 6.5 H14 L14.5 9.5 Z" fill="#e4e4e4" stroke="#aaa" stroke-width="0.5"/><rect x="1.5" y="9.5" width="13" height="3" fill="#8c8c8c"/><rect x="2" y="10" width="12" height="1" fill="#4a4a4a"/><g fill="#1e9bf0"><rect x="0.5" y="0.5" width="2.6" height="2.6"/><rect x="3.6" y="0.5" width="2.6" height="2.6"/><rect x="0.5" y="3.6" width="2.6" height="2.6"/><rect x="3.6" y="3.6" width="2.6" height="2.6"/></g></svg>
<svg style="position:absolute;left:299px;top:156px" width="11" height="11" viewBox="0 0 11 11"><path d="M6.6 0.6 L10.4 4.4 L9.2 4.9 L7.2 6.9 L7 9 L5.9 9.6 L3.9 7.6 L0.8 10.4 L0.6 10.2 L3.4 7.1 L1.4 5.1 L2 4 L4.1 3.8 L6.1 1.8 Z" fill="#7d8791"/></svg>
<span style="position:absolute;left:48.50px;top:176.70px;font-size:11.7px;line-height:15px;color:#1e1e1e;letter-spacing:-0.249px;white-space:nowrap;">Локальный диск (D:)</span>
<svg style="position:absolute;left:28.5px;top:182.0px" width="16" height="9" viewBox="0 0 16 9"><path d="M1.5 5.5 L5 2.5 H14 L14.5 5.5 Z" fill="#e4e4e4" stroke="#aaa" stroke-width="0.5"/><rect x="1.5" y="5.5" width="13" height="3" fill="#8c8c8c"/><rect x="2" y="6" width="12" height="1" fill="#4a4a4a"/></svg>
<svg style="position:absolute;left:299px;top:178.5px" width="11" height="11" viewBox="0 0 11 11"><path d="M6.6 0.6 L10.4 4.4 L9.2 4.9 L7.2 6.9 L7 9 L5.9 9.6 L3.9 7.6 L0.8 10.4 L0.6 10.2 L3.4 7.1 L1.4 5.1 L2 4 L4.1 3.8 L6.1 1.8 Z" fill="#7d8791"/></svg>
<span style="position:absolute;left:48.50px;top:199.20px;font-size:11.7px;line-height:15px;color:#1e1e1e;letter-spacing:-0.325px;white-space:nowrap;">Outputs</span>
<div style="position:absolute;left:30.5px;top:199.5px;opacity:1"><svg width="12" height="15" viewBox="0 0 12 15" style="display:block"><path d="M1 1.5 L6 0.6 L6 13 L1 14 Z" fill="#ecc660"/><path d="M2.6 1.9 L9.6 1.2 Q10.6 1.2 10.6 2.2 L10.9 12 Q10.9 12.9 10 13 L3 14.3 Z" fill="#fbe192"/><path d="M1 1.5 L2.6 1.9 L3 14.3 L1 14Z" fill="#e2b548"/></svg></div>
<span style="position:absolute;left:48.50px;top:221.70px;font-size:11.7px;line-height:15px;color:#1e1e1e;letter-spacing:-0.183px;white-space:nowrap;">Новая папка (4)</span>
<div style="position:absolute;left:30.5px;top:222.0px;opacity:1"><svg width="12" height="15" viewBox="0 0 12 15" style="display:block"><path d="M1 1.5 L6 0.6 L6 13 L1 14 Z" fill="#ecc660"/><path d="M2.6 1.9 L9.6 1.2 Q10.6 1.2 10.6 2.2 L10.9 12 Q10.9 12.9 10 13 L3 14.3 Z" fill="#fbe192"/><path d="M1 1.5 L2.6 1.9 L3 14.3 L1 14Z" fill="#e2b548"/></svg></div>
<span style="position:absolute;left:48.50px;top:244.20px;font-size:11.7px;line-height:15px;color:#1e1e1e;letter-spacing:0.036px;white-space:nowrap;">прео</span>
<div style="position:absolute;left:30.5px;top:244.5px;opacity:1"><svg width="12" height="15" viewBox="0 0 12 15" style="display:block"><path d="M1 1.5 L6 0.6 L6 13 L1 14 Z" fill="#ecc660"/><path d="M2.6 1.9 L9.6 1.2 Q10.6 1.2 10.6 2.2 L10.9 12 Q10.9 12.9 10 13 L3 14.3 Z" fill="#fbe192"/><path d="M1 1.5 L2.6 1.9 L3 14.3 L1 14Z" fill="#e2b548"/></svg></div>
<span style="position:absolute;left:48.50px;top:266.70px;font-size:11.7px;line-height:15px;color:#1e1e1e;letter-spacing:-0.151px;white-space:nowrap;">Снимки экрана</span>
<div style="position:absolute;left:30.5px;top:267.0px;opacity:1"><svg width="12" height="15" viewBox="0 0 12 15" style="display:block"><path d="M1 1.5 L6 0.6 L6 13 L1 14 Z" fill="#ecc660"/><path d="M2.6 1.9 L9.6 1.2 Q10.6 1.2 10.6 2.2 L10.9 12 Q10.9 12.9 10 13 L3 14.3 Z" fill="#fbe192"/><path d="M1 1.5 L2.6 1.9 L3 14.3 L1 14Z" fill="#e2b548"/></svg></div>
<span style="position:absolute;left:41.00px;top:296.70px;font-size:11.7px;line-height:15px;color:#1e1e1e;letter-spacing:-0.365px;white-space:nowrap;">OneDrive</span>
<svg style="position:absolute;left:19.5px;top:297.7px" width="17" height="12.6" viewBox="0 0 16 12"><path d="M4 10.5 A3 3 0 0 1 4.2 4.6 A4.2 4.2 0 0 1 11.8 4 A3.3 3.3 0 0 1 12.5 10.5 Z" fill="#1283da"/><path d="M4 10.5 A3 3 0 0 1 4.2 4.6 A4.2 4.2 0 0 1 8 2 Q6 5 9 10.5Z" fill="#0b62b8"/></svg>
<span style="position:absolute;left:41.00px;top:326.70px;font-size:11.7px;line-height:15px;color:#1e1e1e;letter-spacing:-0.411px;white-space:nowrap;">Яндекс.Диск</span>
<div style="position:absolute;left:24.5px;top:327.0px"><svg width="12" height="15" viewBox="0 0 12 15" style="display:block"><path d="M1 1.5 L6 0.6 L6 13 L1 14 Z" fill="#ecc660"/><path d="M2.6 1.9 L9.6 1.2 Q10.6 1.2 10.6 2.2 L10.9 12 Q10.9 12.9 10 13 L3 14.3 Z" fill="#fbe192"/><path d="M1 1.5 L2.6 1.9 L3 14.3 L1 14Z" fill="#e2b548"/></svg></div><svg style="position:absolute;left:25.5px;top:334.5px" width="14" height="8" viewBox="0 0 14 8"><ellipse cx="7" cy="3.4" rx="5.6" ry="2.6" fill="#2a8cf0" transform="rotate(-22 7 3.4)"/><ellipse cx="7.6" cy="4" rx="2.8" ry="1.1" fill="#e8f6ff" transform="rotate(-22 7.6 4)"/></svg>
<span style="position:absolute;left:48.50px;top:349.20px;font-size:11.7px;line-height:15px;color:#1e1e1e;letter-spacing:-0.962px;white-space:nowrap;">.sync</span>
<div style="position:absolute;left:30.5px;top:349.5px;opacity:0.55"><svg width="12" height="15" viewBox="0 0 12 15" style="display:block"><path d="M1 1.5 L6 0.6 L6 13 L1 14 Z" fill="#ecc660"/><path d="M2.6 1.9 L9.6 1.2 Q10.6 1.2 10.6 2.2 L10.9 12 Q10.9 12.9 10 13 L3 14.3 Z" fill="#fbe192"/><path d="M1 1.5 L2.6 1.9 L3 14.3 L1 14Z" fill="#e2b548"/></svg></div>
<span style="position:absolute;left:41.00px;top:379.20px;font-size:11.7px;line-height:15px;color:#1e1e1e;letter-spacing:-0.178px;white-space:nowrap;">Этот компьютер</span>
<svg style="position:absolute;left:22.5px;top:380.5px" width="16" height="13" viewBox="0 0 16 13"><rect x="3.5" y="1" width="11" height="7.5" fill="#3da5f2" stroke="#6a7f92" stroke-width="0.8"/><path d="M1 11.5 L5 9 H13 L11 11.5Z" fill="#d8dde2" stroke="#8a97a3" stroke-width="0.5"/><path d="M3.8 1.4 L14 8" stroke="#8fd0fa" stroke-width="0.6"/></svg>
<span style="position:absolute;left:48.50px;top:401.70px;font-size:11.7px;line-height:15px;color:#1e1e1e;letter-spacing:-0.436px;white-space:nowrap;">Видео</span>
<svg style="position:absolute;left:29.5px;top:402.5px" width="14" height="14" viewBox="0 0 14 14"><rect x="1" y="0.5" width="12" height="13" fill="#3a3a3a"/><rect x="3.2" y="1.2" width="7.6" height="5.4" fill="#5b8f3a"/><rect x="3.2" y="7.4" width="7.6" height="5.4" fill="#b5562f"/><g fill="#e8e8e8"><rect x="1.5" y="1.5" width="1" height="1.5"/><rect x="1.5" y="4.5" width="1" height="1.5"/><rect x="1.5" y="7.5" width="1" height="1.5"/><rect x="1.5" y="10.5" width="1" height="1.5"/><rect x="11.5" y="1.5" width="1" height="1.5"/><rect x="11.5" y="4.5" width="1" height="1.5"/><rect x="11.5" y="7.5" width="1" height="1.5"/><rect x="11.5" y="10.5" width="1" height="1.5"/></g><rect x="5" y="2.5" width="3" height="3" fill="#3f7fd8"/></svg>
<span style="position:absolute;left:48.50px;top:424.20px;font-size:11.7px;line-height:15px;color:#1e1e1e;letter-spacing:-0.257px;white-space:nowrap;">Документы</span>
<svg style="position:absolute;left:30.5px;top:425.0px" width="13" height="14" viewBox="0 0 13 14"><path d="M1.5 0.5 H8 L11.5 4 V13.5 H1.5 Z" fill="#fff" stroke="#a0a0a0"/><path d="M8 0.5 V4 H11.5" fill="#eee" stroke="#a0a0a0"/><path d="M3.5 3 H7 M3.5 5 H7 M3.5 7 H9.5 M3.5 9 H9.5" stroke="#5b9bd8" stroke-width="0.9"/><rect x="3.3" y="2.3" width="3.4" height="3.4" fill="#6fb0ea"/></svg>
</div>
<span style="position:absolute;left:202.50px;top:613.00px;font-size:11px;line-height:14px;color:#454f6a;letter-spacing:-0.037px;white-space:nowrap;">Элементов: 2</span>
<span style="position:absolute;left:289.50px;top:613.00px;font-size:11px;line-height:14px;color:#454f6a;letter-spacing:0.013px;white-space:nowrap;">Выбран 1 элемент: 362 МБ</span>
<div style="position:absolute;left:280px;top:612px;width:1px;height:16px;background:#ececec"></div>
<div style="position:absolute;left:437.5px;top:612px;width:1px;height:16px;background:#ececec"></div>
<div style="position:absolute;left:1785.5px;top:609.5px;width:20px;height:20px;background:#cce4f7;border:1px solid #8ec5ee;box-sizing:border-box"></div>
<svg style="position:absolute;left:1789px;top:613.5px" width="14" height="12" viewBox="0 0 14 12"><g fill="#8a8a8a"><rect x="4.5" y="1.5" width="9" height="1"/><rect x="4.5" y="5.5" width="9" height="1"/><rect x="4.5" y="9.5" width="9" height="1"/></g><g fill="none" stroke="#7a7a7a" stroke-width="0.8"><rect x="0.6" y="0.6" width="2.6" height="2.6"/><rect x="0.6" y="4.6" width="2.6" height="2.6"/></g><rect x="0.6" y="8.6" width="2.6" height="2.6" fill="none" stroke="#e06a3a" stroke-width="0.8"/></svg>
<svg style="position:absolute;left:1809.5px;top:614.5px" width="14" height="11" viewBox="0 0 14 11"><rect x="0.5" y="0.5" width="13" height="10" fill="#fff" stroke="#8a8a8a"/><rect x="2" y="2" width="10" height="7" fill="#3f7fd0"/><path d="M2 9 L5.5 5 L8 7.5 L10 6 L12 9Z" fill="#2f6b3a"/><rect x="2" y="2" width="10" height="2.4" fill="#9cc6ee"/></svg>
<span style="position:absolute;left:538.00px;top:176.90px;font-size:11.6px;line-height:15px;color:#4c607a;letter-spacing:-0.265px;white-space:nowrap;">Имя</span>
<span style="position:absolute;left:782.20px;top:176.90px;font-size:11.6px;line-height:15px;color:#4c607a;letter-spacing:-0.133px;white-space:nowrap;">Дата изменения</span>
<span style="position:absolute;left:917.70px;top:176.90px;font-size:11.6px;line-height:15px;color:#4c607a;letter-spacing:-0.213px;white-space:nowrap;">Тип</span>
<span style="position:absolute;left:1029.80px;top:176.90px;font-size:11.6px;line-height:15px;color:#4c607a;letter-spacing:-0.312px;white-space:nowrap;">Размер</span>
<svg style="position:absolute;left:650.5px;top:172.5px" width="8" height="5" viewBox="0 0 8 5"><path d="M0.6 4.3 L4 0.9 L7.4 4.3" fill="none" stroke="#9a9a9a" stroke-width="0.9"/></svg>
<div style="position:absolute;left:776px;top:173px;width:1px;height:23px;background:#e5e5e5"></div>
<div style="position:absolute;left:911px;top:173px;width:1px;height:23px;background:#e5e5e5"></div>
<div style="position:absolute;left:1024px;top:173px;width:1px;height:23px;background:#e5e5e5"></div>
<div style="position:absolute;left:1099px;top:173px;width:1px;height:23px;background:#e5e5e5"></div>
<div style="position:absolute;left:535.5px;top:202.5px;width:560.5px;height:20.5px;background:#d9d9d9"></div>
<svg style="position:absolute;left:541px;top:205px" width="12" height="15" viewBox="0 0 12 15"><path d="M0.6 0.6 H7.6 L11.4 4.4 V14.4 H0.6 Z" fill="#fff" stroke="#9a9a9a" stroke-width="1"/><path d="M7.6 0.6 V4.4 H11.4" fill="#f2f2f2" stroke="#9a9a9a" stroke-width="1"/></svg>
<svg style="position:absolute;left:541px;top:225.5px" width="12" height="15" viewBox="0 0 12 15"><path d="M0.6 0.6 H7.6 L11.4 4.4 V14.4 H0.6 Z" fill="#fff" stroke="#9a9a9a" stroke-width="1"/><path d="M7.6 0.6 V4.4 H11.4" fill="#f2f2f2" stroke="#9a9a9a" stroke-width="1"/></svg>
<span style="position:absolute;left:558.30px;top:205.50px;font-size:11.7px;line-height:15px;color:#1a1a1a;letter-spacing:-0.327px;white-space:nowrap;">Best-Text15-Body - Textures.ba2</span>
<span style="position:absolute;left:558.30px;top:226.00px;font-size:11.7px;line-height:15px;color:#1a1a1a;letter-spacing:-0.345px;white-space:nowrap;">Best-Text15-Body.esp</span>
<span style="position:absolute;left:782.20px;top:205.50px;font-size:11.7px;line-height:15px;color:#6d6d6d;letter-spacing:-0.587px;white-space:nowrap;">02.07.2020 19:00</span>
<span style="position:absolute;left:782.20px;top:226.00px;font-size:11.7px;line-height:15px;color:#6d6d6d;letter-spacing:-0.587px;white-space:nowrap;">16.12.2018 15:54</span>
<span style="position:absolute;left:917.70px;top:205.50px;font-size:11.7px;line-height:15px;color:#6d6d6d;letter-spacing:-0.414px;white-space:nowrap;">Файл "BA2"</span>
<span style="position:absolute;left:917.70px;top:226.00px;font-size:11.7px;line-height:15px;color:#6d6d6d;letter-spacing:-0.723px;white-space:nowrap;">Файл "ESP"</span>
<span style="position:absolute;left:91.31px;width:1000px;text-align:right;top:205.50px;font-size:11.7px;line-height:15px;color:#6d6d6d;letter-spacing:-0.494px;white-space:nowrap;">371 207 КБ</span>
<span style="position:absolute;left:91.36px;width:1000px;text-align:right;top:226.00px;font-size:11.7px;line-height:15px;color:#6d6d6d;letter-spacing:-0.438px;white-space:nowrap;">1 КБ</span></div>
<div id="dialog"><div id="dlg" style="position:absolute;left:772px;top:270px;width:368px;height:282px;background:#fff;border:1px solid #d2d2d2;box-sizing:border-box"></div>
<span style="position:absolute;left:795.00px;top:287.20px;font-size:17.2px;line-height:22px;color:#1b1b1b;letter-spacing:-0.367px;white-space:nowrap;">Каким образом вы хотите открыть этот</span>
<span style="position:absolute;left:795.00px;top:308.50px;font-size:17.2px;line-height:22px;color:#1b1b1b;letter-spacing:-1.586px;white-space:nowrap;">файл?</span>
<div style="position:absolute;left:795.5px;top:350px;width:38px;height:38px;background:#0078d7"></div>
<svg style="position:absolute;left:795.5px;top:350px" width="38" height="38" viewBox="0 0 38 38"><path d="M14 13.5 V11 Q14 8.6 16.4 8.6 H21.6 Q24 8.6 24 11 V13.5" fill="none" stroke="#e9f2fb" stroke-width="1.5"/><path d="M8 13.5 H30 L29 28.5 H9 Z" fill="#f2f2f2"/><rect x="15.2" y="17" width="3.4" height="3.4" fill="#f25022"/><rect x="19.3" y="17" width="3.4" height="3.4" fill="#7fba00"/><rect x="15.2" y="21.1" width="3.4" height="3.4" fill="#00a4ef"/><rect x="19.3" y="21.1" width="3.4" height="3.4" fill="#ffb900"/></svg>
<span style="position:absolute;left:844.20px;top:351.00px;font-size:14.2px;line-height:18px;color:#1b1b1b;letter-spacing:-0.270px;white-space:nowrap;">Поиск приложения в Microsoft Store</span>
<span style="position:absolute;left:795.00px;top:403.20px;font-size:14.2px;line-height:18px;color:#1f8ae6;letter-spacing:-0.493px;white-space:nowrap;">Еще приложения</span>
<svg style="position:absolute;left:907.5px;top:405.5px" width="12" height="13" viewBox="0 0 12 13"><path d="M6 0.8 V11.6 M1.4 7.2 L6 11.8 L10.6 7.2" fill="none" stroke="#1f8ae6" stroke-width="1.1"/></svg>
<div style="position:absolute;left:795.5px;top:460px;width:19.5px;height:19px;border:2px solid #bcbcbc;box-sizing:border-box;background:#fff"></div>
<svg style="position:absolute;left:795.5px;top:460px" width="20" height="19" viewBox="0 0 20 19"><path d="M3.4 10 L7.6 14.4 L16.6 4.4" fill="none" stroke="#000" stroke-width="2.7"/></svg>
<span style="position:absolute;left:823.00px;top:453.30px;font-size:13.2px;line-height:17px;color:#1b1b1b;letter-spacing:0.031px;white-space:nowrap;">Всегда использовать это приложение для</span>
<span style="position:absolute;left:823.00px;top:471.20px;font-size:13.2px;line-height:17px;color:#1b1b1b;letter-spacing:-0.054px;white-space:nowrap;">открытия .ba2 файлов</span>
<div style="position:absolute;left:929.3px;top:499px;width:187.6px;height:29.6px;background:#e6e6e6"></div>
<span style="position:absolute;left:522.70px;width:1000px;text-align:center;top:505.20px;font-size:14.2px;line-height:18px;color:#8c8c8c;white-space:nowrap;">OK</span></div>
<div id="tb"><div id="taskbar" style="position:absolute;left:0;top:1042px;width:1920px;height:38px;background:#1b202c"></div>
<svg style="position:absolute;left:15px;top:1053.3px" width="15.4" height="16.2" viewBox="0 0 16 16"><path d="M0 2.3 L6.5 1.4 V7.6 H0 Z M7.3 1.3 L16 0 V7.6 H7.3 Z M0 8.4 H6.5 V14.6 L0 13.7 Z M7.3 8.4 H16 V16 L7.3 14.7 Z" fill="#fff"/></svg>
<div style="position:absolute;left:45px;top:1042px;width:322.5px;height:38px;background:#f3f3f3;border-top:1px solid #d0d0d0;box-sizing:border-box"></div>
<svg style="position:absolute;left:55.5px;top:1053px" width="17" height="17" viewBox="0 0 17 17"><circle cx="10.4" cy="6.4" r="5" fill="none" stroke="#222" stroke-width="1.3"/><path d="M6.8 10 L1 15.8" stroke="#222" stroke-width="1.5"/></svg>
<span style="position:absolute;left:83.30px;top:1052.30px;font-size:14.6px;line-height:19px;color:#3c3c3c;letter-spacing:-0.484px;white-space:nowrap;">Введите здесь текст для поиска</span>
<svg style="position:absolute;left:381.5px;top:1053px" width="18" height="16" viewBox="0 0 18 16"><g fill="none" stroke="#ccd0d8" stroke-width="1.35"><path d="M1.3 0.8 V14.9 M10.3 0.8 V14.9 M1.3 4.1 H10.3 M1.3 11.5 H10.3"/><path d="M15 0.8 V4.4 M15 8 V14.9" stroke-width="1.2"/></g><circle cx="15" cy="6.2" r="1.15" fill="#f2f4f6"/></svg>
<svg style="position:absolute;left:426.5px;top:1049.6px;overflow:visible" width="23" height="23" viewBox="0 0 48 48"><defs><linearGradient id="g29" x1="0" y1="0" x2="0" y2="1"><stop offset="0" stop-color="#ff1b2d"/><stop offset="1" stop-color="#c80a1c"/></linearGradient>
<linearGradient id="g30" x1="0" y1="0" x2="0" y2="1"><stop offset="0" stop-color="#b00a14"/><stop offset="0.5" stop-color="#ff4048"/><stop offset="1" stop-color="#ff565c"/></linearGradient></defs>
<path fill-rule="evenodd" d="M24.2 2.8 A21.8 22 0 1 0 24.2 46.800001 A21.8 22 0 1 0 24.2 2.8 Z M24.2 9.2 C30.6 9.2 35.2 15.6 35.2 24.8 C35.2 34 30.6 40.400001 24.2 40.400001 C17.8 40.400001 13.2 34 13.2 24.8 C13.2 15.6 17.8 9.2 24.2 9.2 Z" fill="url(#g29)"/>
<path d="M26 5.4 Q34 4.6 40 11 Q46 18 46 24.8 Q46 33 40 39.4 Q34 45 27 44.2 Q36 40 37.6 24.8 Q36.4 10 26 5.4Z" fill="url(#g30)"/></svg>
<svg style="position:absolute;left:473.1px;top:1049.6px;overflow:visible" width="23" height="23" viewBox="0 0 48 48"><defs><linearGradient id="g31" x1="0" y1="0" x2="0.9" y2="1"><stop offset="0" stop-color="#2fb2ee"/><stop offset="1" stop-color="#1467c4"/></linearGradient>
<linearGradient id="g32" x1="0.05" y1="0.3" x2="0.95" y2="0.55"><stop offset="0" stop-color="#2aa6ea"/><stop offset="0.45" stop-color="#2ec2d0"/><stop offset="0.8" stop-color="#4fd88a"/><stop offset="1" stop-color="#6ee052"/></linearGradient>
<linearGradient id="g33" x1="0.2" y1="0" x2="0.7" y2="1"><stop offset="0" stop-color="#1a70c6"/><stop offset="1" stop-color="#0d4a98"/></linearGradient></defs>
<path d="M0.6 24 C0.6 31 3.6 37.6 9 42 C13 45.4 18 47.2 22 47.4 C16 43 12.8 37.6 12.8 32 C12.8 24.6 17.6 19 24.6 17 C16 13 4 17 0.6 24Z" fill="url(#g31)"/>
<path d="M11 43.4 C14.6 46 19 47.4 24 47.4 C32 47.4 39.5 43.5 43.6 37 C44.4 35.6 43.2 34.6 42 35.4 C37 38.6 30 38.6 25.6 35 C21 31 20.6 25 23.6 20.6 C17 22 12.4 27 12.4 33 C12.4 37 13.6 40.6 11 43.4Z" fill="url(#g33)"/>
<path d="M12.4 33 C12.4 27 17 22 23.6 20.6 C21 24.4 21 31 25.6 35 C30 38.6 37 38.6 42 35.4 C36 43 26 45 19 41 C15 38.6 12.4 36 12.4 33Z" fill="url(#g33)"/>
<path d="M0.6 24 C0.6 10.6 11 0.6 24 0.6 C37 0.6 47.4 10.5 47.4 22.5 C47.4 29 42.5 33.5 36.5 33.5 C32 33.5 28.4 31.6 28.4 29 C28.4 27.6 30.4 26.4 30.4 22.6 C30.4 18.5 26.5 15 21.5 15 C12 15 3.5 21.5 2.4 31 C1.2 29 0.6 26.5 0.6 24Z" fill="url(#g32)"/></svg>
<svg style="position:absolute;left:519.2px;top:1049.6px;overflow:visible" width="23" height="23" viewBox="0 0 48 48"><defs><linearGradient id="g34" x1="0" y1="0" x2="1" y2="0"><stop offset="0" stop-color="#ff5a00"/><stop offset="0.5" stop-color="#ff3d14"/><stop offset="1" stop-color="#f5200c"/></linearGradient></defs>
<path d="M16 0.8 H32.8 L37.6 5.2 L41.6 4.8 L44.6 10 L43 14 L45 17.4 L39.2 35.6 Q38 39.4 36 41.2 L24.4 48.6 L12.8 41.2 Q10.8 39.4 9.6 35.6 L3.8 17.4 L5.8 14 L4.2 10 L7.2 4.8 L11.2 5.2 Z" fill="url(#g34)"/>
<path d="M24.4 7.4 L30 8.8 L35.2 8 L40.6 15.2 L38.2 19.6 L39 22.4 L34 28.6 L34.8 31.2 L31 35 L24.4 31 L17.8 35 L14 31.2 L14.8 28.6 L9.8 22.4 L10.6 19.6 L8.2 15.2 L13.6 8 L18.8 8.8 Z" fill="#fff"/>
<path d="M24.4 32.4 L31.4 36.4 L24.4 41 L17.4 36.4Z" fill="#fff"/>
<path d="M14 12.6 L21 14.8 L20.4 16.2 L15.4 15.6Z M34.8 12.6 L27.8 14.8 L28.4 16.2 L33.4 15.6Z" fill="#ff4a14"/>
<path d="M21.4 15.4 L20.2 23 L16.6 27.4 M27.4 15.4 L28.6 23 L32.2 27.4" fill="none" stroke="#ff4a14" stroke-width="1.3"/>
<path d="M21.4 25.6 L24.4 27.4 L27.4 25.6 L26 29 L24.4 30 L22.8 29Z" fill="#ff4a14"/></svg>
<svg style="position:absolute;left:565.5px;top:1049.6px;overflow:visible" width="23" height="23" viewBox="0 0 48 48"><defs><radialGradient id="g35" cx="0.7" cy="0.15" r="1"><stop offset="0" stop-color="#fff36a"/><stop offset="0.35" stop-color="#ffb21e"/><stop offset="0.65" stop-color="#ff5a2a"/><stop offset="1" stop-color="#e8226a"/></radialGradient>
<radialGradient id="g36" cx="0.45" cy="0.4" r="0.6"><stop offset="0" stop-color="#9a5cf5"/><stop offset="1" stop-color="#5a2ad0"/></radialGradient>
<linearGradient id="g37" x1="0" y1="0" x2="1" y2="1"><stop offset="0" stop-color="#ffd23a"/><stop offset="1" stop-color="#ff7a1a"/></linearGradient></defs>
<path d="M26 1 Q31 4 32.6 9.6 Q38 10 41 15 Q46.6 23 43.6 33 Q39 45.6 25 46.6 Q10 46 4.6 33 Q1.6 23 7 14 Q7.6 17 9 18.6 Q10.6 12 15.6 8.6 Q15 12 17 14.6 Q21 10 22 6.6 Q23 3 26 1Z" fill="url(#g35)"/>
<circle cx="24.6" cy="27" r="11" fill="url(#g36)"/>
<path d="M9 18.6 Q13 15 18.6 16.6 Q22 18 24.6 17.4 Q27 17.6 26.6 19.6 Q24 22 21 22 Q19 26 22 29.6 Q16 30 13.4 25 Q10 24 9 18.6Z" fill="url(#g37)"/>
<path d="M32.6 9.6 Q38 16 37 23 Q36 32 27 36 Q20 38 14 33 Q20 41 30 38.6 Q40 35 41 24 Q41 15 32.6 9.6Z" fill="#ffbd2e" fill-opacity="0.9"/></svg>
<svg style="position:absolute;left:612.0px;top:1049.6px;overflow:visible" width="23" height="23" viewBox="0 0 48 48"><circle cx="24" cy="24" r="22" fill="#0e0a0b" stroke="#e02228" stroke-width="2.2"/>
<g fill="#e3262b"><path d="M22 10.5 L25.4 10.5 L26 13.4 Q27.6 13.8 29 14.6 L25 18.4 Q22.6 17.6 20.4 18.6 Q16.6 20.6 17 24.8 Q17.6 28.6 21.6 29.6 L20.6 33 L18 35.4 L15.8 37 L13.4 34.6 L15 32 Q13.8 30.6 13.2 29 L10.2 28.6 L10.2 25 L10.2 21.6 L13.2 21 Q13.8 19.2 15 17.8 L13.4 15.2 L15.8 12.8 L18.4 14.4 Q19.8 13.6 21.4 13.2 Z"/>
<path d="M29.6 12.4 L38.6 21.6 L34.2 21.8 Q34.4 31.6 24.4 37.4 Q29 31 28 22.2 L23.6 22.6 Z"/>
<path d="M20.8 21.6 A3.6 3.6 0 1 0 25.6 25.4 L23.4 24.8 A1.6 1.6 0 1 1 21.4 23.4Z"/></g></svg>
<svg style="position:absolute;left:658.5px;top:1049.6px;overflow:visible" width="23" height="23" viewBox="0 0 48 48"><defs><linearGradient id="g38" x1="0" y1="1" x2="1" y2="0"><stop offset="0" stop-color="#7a3cf0"/><stop offset="0.5" stop-color="#3a6cf6"/><stop offset="1" stop-color="#1fd0f5"/></linearGradient>
<linearGradient id="g39" x1="0" y1="1" x2="1" y2="0"><stop offset="0" stop-color="#7d3cf2"/><stop offset="1" stop-color="#4a6af8"/></linearGradient></defs>
<circle cx="24" cy="24" r="22.4" fill="#121216" stroke="url(#g38)" stroke-width="1.9"/>
<g fill="url(#g39)"><path d="M11 17.6 L19 16.4 V23 H11Z"/><path d="M20.4 16.2 L27 15.2 L25 19 L27.6 19.4 L25.6 23 H20.4Z"/><path d="M11 24.4 H19 V31.6 L11 30.4Z"/><path d="M20.4 24.4 H25 Q25 29 23 32.2 L20.4 31.8Z"/></g>
<path d="M31.6 10.6 L39 19.6 H34.8 Q35 28.6 25.6 34 Q30 27.6 29 19.6 H25Z" fill="#1fbff2"/></svg>
<svg style="position:absolute;left:705.1px;top:1049.6px;overflow:visible" width="23" height="23" viewBox="0 0 48 48"><circle cx="24" cy="24" r="21.8" fill="#17181c" stroke="#0aa5fa" stroke-width="2.2"/>
<text x="24.6" y="36.4" font-family="'Liberation Sans',sans-serif" font-weight="bold" font-style="italic" font-size="35.5" fill="#0aa8fc" text-anchor="middle">C</text></svg>
<svg style="position:absolute;left:751.5px;top:1049.6px;overflow:visible" width="23" height="23" viewBox="0 0 48 48"><path d="M4 9 Q4 7 6 7 H17 L21 11 H42 Q44 11 44 13 V20 H4Z" fill="#e8a81e"/><path d="M4 16 H44 V36 Q44 38 42 38 H6 Q4 38 4 36Z" fill="#ffd75e"/><path d="M4 16 H44 V19 H4Z" fill="#fbe28e"/><path d="M12 38 V31 Q12 29 14 29 H34 Q36 29 36 31 V38 H31 V34 H17 V38Z" fill="#3a8ee6"/><rect x="12" y="38" width="24" height="2" fill="#2a6cc0"/></svg>
<svg style="position:absolute;left:797.9px;top:1049.6px;overflow:visible" width="23" height="23" viewBox="0 0 48 48"><defs><linearGradient id="g40" x1="0" y1="0" x2="0" y2="1"><stop offset="0" stop-color="#f7f7f7"/><stop offset="0.7" stop-color="#f0f0f0"/><stop offset="1" stop-color="#d6d6d8"/></linearGradient>
<linearGradient id="g41" x1="0" y1="0" x2="0" y2="1"><stop offset="0" stop-color="#d80000"/><stop offset="1" stop-color="#f53636"/></linearGradient></defs>
<circle cx="24" cy="24" r="22.2" fill="url(#g40)"/>
<path d="M11.1 13.3 L24 25.4 L36.9 13.3 M24 24 V40" fill="none" stroke="url(#g41)" stroke-width="5.4" stroke-linejoin="miter"/></svg>
<svg style="position:absolute;left:844.8px;top:1049.6px;overflow:visible" width="23" height="23" viewBox="0 0 48 48"><rect x="0.2" y="0.6" width="47.6" height="47" rx="6.4" fill="#101112"/>
<g fill="none" stroke="#e8222c" stroke-width="2"><path d="M5 12 V9 Q5 6 8 6 H11"/><path d="M37 6 H40 Q43 6 43 9 V12"/><path d="M5 37 V40 Q5 43 8 43 H11"/><path d="M37 43 H40 Q43 43 43 40 V37"/></g>
<path d="M12 14 H31 Q35 14 35 18 V20.6 L42 16.6 V32.4 L35 28.4 V31 Q35 35 31 35 H12 Q8 35 8 31 V18 Q8 14 12 14Z" fill="#e12434" stroke="#fff" stroke-width="1.4"/>
<path d="M22 24.6 Q18 19.6 15 21.6 Q12.6 24.6 15 27.6 Q18 29.6 22 24.6 Q26 19.6 29.6 21.6 Q32 24.6 29.6 27.6 Q26 29.6 22 24.6Z" fill="none" stroke="#fff" stroke-width="1.8"/></svg>
<div style="position:absolute;left:744.7px;top:1078px;width:38px;height:2px;background:#76b9ed"></div>
<div style="position:absolute;left:791px;top:1078px;width:38px;height:2px;background:#76b9ed"></div>
<svg style="position:absolute;left:1686.5px;top:1057px" width="14" height="9" viewBox="0 0 14 9"><path d="M1 8 L7 1.6 L13 8" fill="none" stroke="#fff" stroke-width="1.3"/></svg>
<svg style="position:absolute;left:1709.5px;top:1053.5px" width="14" height="16" viewBox="0 0 14 16"><g fill="none" stroke="#fff" stroke-width="1"><rect x="1.5" y="4.5" width="7" height="7" rx="1"/><path d="M8.5 7 L12.5 5 V11 L8.5 9"/><path d="M2.5 2.2 Q5 0.4 7.5 2.2 M2.5 13.8 Q5 15.6 7.5 13.8" stroke-opacity="0.75"/></g></svg>
<svg style="position:absolute;left:1731px;top:1054px" width="16" height="14" viewBox="0 0 16 14"><g fill="none" stroke="#fff" stroke-width="1.1"><path d="M2 13 A11.5 11.5 0 0 1 13 2" stroke-opacity="0.95"/><path d="M5.4 13 A8 8 0 0 1 13 5.4" stroke-opacity="0.95"/><path d="M8.8 13 A4.6 4.6 0 0 1 13 8.8" stroke-opacity="0.95"/></g><circle cx="12.6" cy="12.4" r="1.2" fill="#fff"/></svg>
<svg style="position:absolute;left:1752.5px;top:1054px" width="18" height="15" viewBox="0 0 18 15"><path d="M1 5.2 H3.6 L7 2 V13 L3.6 9.8 H1 Z" fill="none" stroke="#fff" stroke-width="1"/><path d="M9 5.4 Q10.4 7.5 9 9.6" fill="none" stroke="#fff" stroke-width="1"/><path d="M11 3.6 Q13.6 7.5 11 11.4" fill="none" stroke="#fff" stroke-width="1" stroke-opacity="0.8"/><path d="M13.2 1.8 Q16.8 7.5 13.2 13.2" fill="none" stroke="#fff" stroke-width="1" stroke-opacity="0.4"/></svg>
<span style="position:absolute;left:1779.00px;top:1054.30px;font-size:11.6px;line-height:15px;color:#fff;letter-spacing:-1.076px;white-space:nowrap;">РУС</span>
<span style="position:absolute;left:1338.00px;width:1000px;text-align:center;top:1045.30px;font-size:11.6px;line-height:15px;color:#fff;letter-spacing:-0.606px;white-space:nowrap;">10:17</span>
<span style="position:absolute;left:1337.60px;width:1000px;text-align:center;top:1062.70px;font-size:11.6px;line-height:15px;color:#fff;letter-spacing:-0.626px;white-space:nowrap;">09.04.2021</span>
<svg style="position:absolute;left:1881px;top:1053.5px" width="17" height="16" viewBox="0 0 17 16"><path d="M0.8 0.8 H15.8 V11.6 H10.8 L8.3 14.2 L5.8 11.6 H0.8 Z" fill="none" stroke="#fff" stroke-width="1.1"/></svg>
<div style="position:absolute;left:1915.5px;top:1042px;width:1px;height:38px;background:#5a5f6a"></div></div>
</body></html>
